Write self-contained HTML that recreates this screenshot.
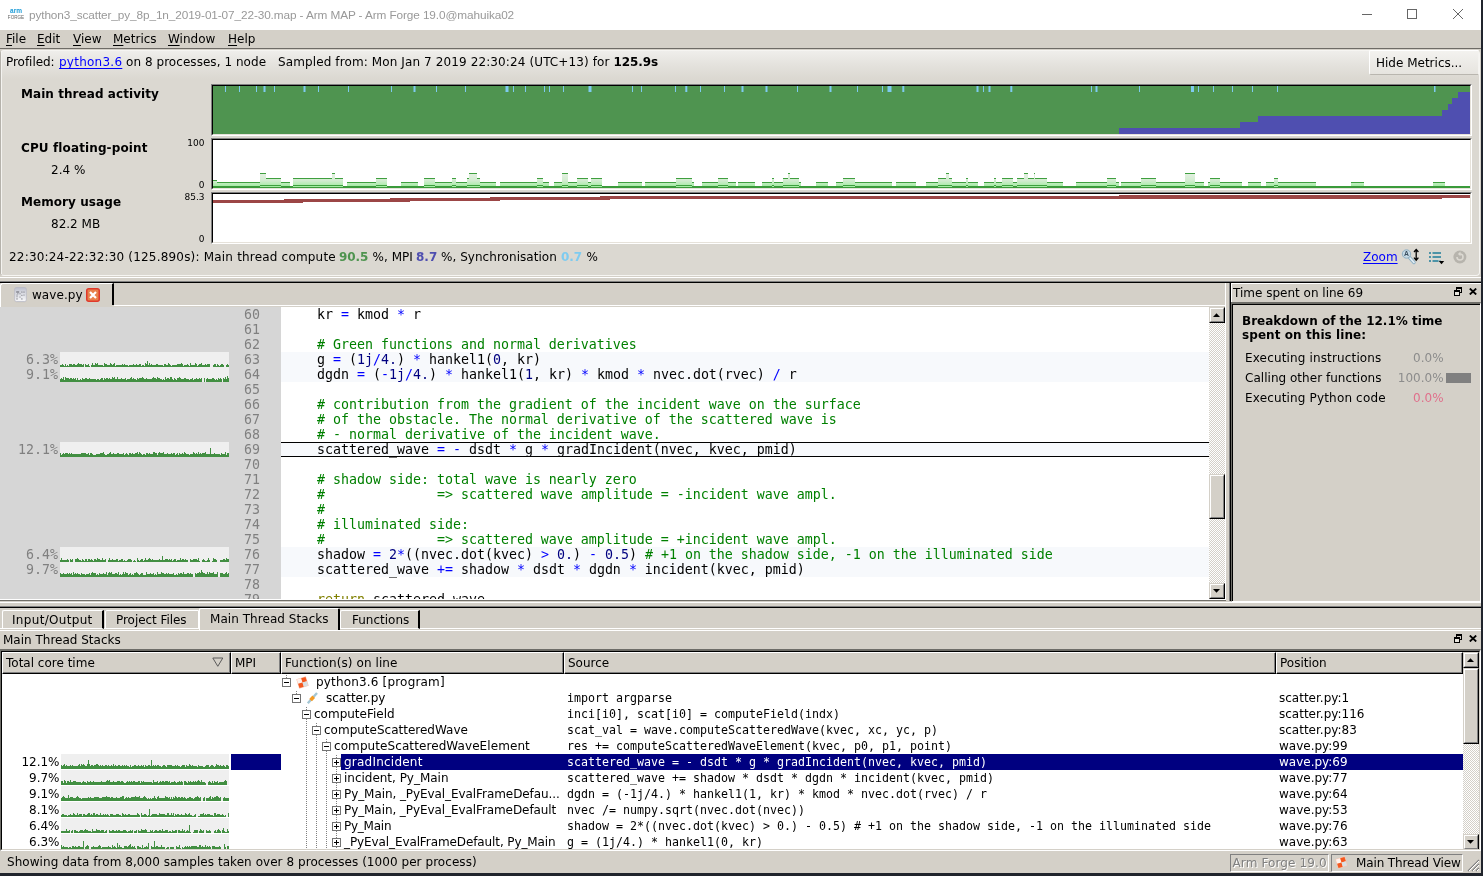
<!DOCTYPE html><html><head><meta charset="utf-8"><title>Arm MAP</title><style>
html,body{margin:0;padding:0;}
body{width:1483px;height:876px;overflow:hidden;background:#20242c;position:relative;}
#w{will-change:transform;position:absolute;left:0;top:0;width:1481px;height:873px;background:#d4d0c8;overflow:hidden;}
#w div,#w span,#w svg{position:absolute;box-sizing:border-box;}
#w span span{position:static;}
.u{font-family:"DejaVu Sans","Liberation Sans",sans-serif;font-size:12px;line-height:14px;color:#000;white-space:pre;}
.b{font-family:"DejaVu Sans","Liberation Sans",sans-serif;font-size:12px;line-height:14px;color:#000;white-space:pre;font-weight:bold;}
.m{font-family:"DejaVu Sans Mono","Liberation Mono",monospace;font-size:13.29px;line-height:15px;color:#000;white-space:pre;}
.s{font-family:"DejaVu Sans Mono","Liberation Mono",monospace;font-size:11.63px;line-height:16px;color:#000;white-space:pre;}
.t{font-family:"Liberation Sans",sans-serif;font-size:11.8px;line-height:14px;color:#999;white-space:pre;}
.g{color:#808080}
.c{color:#008000}
.o{color:#0000ff}
.n{color:#000080}
.k{color:#808000}
u{text-decoration:underline;text-underline-offset:2px;}
a{color:#0000ff;text-decoration:underline;text-underline-offset:2px;}
</style></head><body><div id="w">
<div style="left:0px;top:0px;width:1481px;height:30px;background:#fff;"></div>
<svg style="left:6px;top:8px" width="20" height="12" viewBox="0 0 20 12"><text x="10" y="5.2" text-anchor="middle" font-family="Liberation Sans,sans-serif" font-weight="bold" font-size="6.5" fill="#1b9bd7">arm</text><text x="10" y="10.6" text-anchor="middle" font-family="Liberation Sans,sans-serif" font-size="4.6" fill="#666">FORGE</text></svg>
<span class="t" style="left:29px;top:8px;letter-spacing:-0.106px;">python3_scatter_py_8p_1n_2019-01-07_22-30.map - Arm MAP - Arm Forge 19.0@mahuika02</span>
<svg style="left:1355px;top:4px" width="120" height="22" viewBox="0 0 120 22" fill="none" stroke="#666" stroke-width="1"><path d="M7 10.5h10"/><rect x="52.5" y="5.5" width="9" height="9"/><path d="M98 5l10 10M108 5l-10 10"/></svg>
<div style="left:0px;top:30px;width:1481px;height:18px;background:#d4d0c8;"></div>
<span class="u" style="left:6px;top:32px;"><u>F</u>ile</span>
<span class="u" style="left:37px;top:32px;"><u>E</u>dit</span>
<span class="u" style="left:73px;top:32px;"><u>V</u>iew</span>
<span class="u" style="left:113px;top:32px;"><u>M</u>etrics</span>
<span class="u" style="left:168px;top:32px;"><u>W</u>indow</span>
<span class="u" style="left:228px;top:32px;"><u>H</u>elp</span>
<div style="left:0px;top:48px;width:1481px;height:1px;background:#6e6b66;"></div>
<div style="left:0px;top:50px;width:1480px;height:226px;background:linear-gradient(#efeeeb 0px,#e4e2dd 14px,#dbd8d1 28px,#dbd8d1 100%);border:1px solid #f6f5f2;border-left:1px solid #b5b2ab;border-radius:4px;"></div>
<div style="left:1px;top:51px;width:1px;height:223px;background:#f4f3f0;"></div>
<span class="u" style="left:6px;top:55px;letter-spacing:-0.043px;">Profiled:</span>
<span class="u" style="left:59px;top:55px;letter-spacing:0.249px;"><a>python3.6</a></span>
<span class="u" style="left:126px;top:55px;letter-spacing:0.051px;">on 8 processes, 1 node</span>
<span class="u" style="left:278px;top:55px;letter-spacing:0.113px;">Sampled from: Mon Jan 7 2019 22:30:24 (UTC+13) for</span>
<span class="b" style="left:613.5px;top:55px;letter-spacing:-0.085px;">125.9s</span>
<div style="left:1369px;top:50px;width:110px;height:25px;background:linear-gradient(#f3f2ef,#e6e4df);border:1px solid #fff;border-right-color:#f4f3f0;border-bottom-color:#b9b6af;border-radius:2px 0 0 2px;"></div>
<span class="u" style="left:1376px;top:56px;">Hide Metrics...</span>
<span class="b" style="left:21px;top:87px;letter-spacing:0.063px;">Main thread activity</span>
<div style="left:211px;top:84px;width:1261px;height:52px;background:#4f9450;border-top:1px solid #808080;border-left:1px solid #808080;border-bottom:1px solid #fff;border-right:1px solid #fff;"></div>
<div style="left:212px;top:85px;width:1259px;height:50px;border-top:1px solid #000;border-left:1px solid #000;border-bottom:1px solid #e6e2da;border-right:1px solid #e6e2da;"></div>
<svg style="left:213px;top:86px" width="1257" height="48" viewBox="213 86 1257 48" shape-rendering="crispEdges"><rect x="213" y="86" width="1257" height="48" fill="#4f9450"/><path d="M1119 134V128H1240V122H1258V116H1442V110H1448V104H1452V98H1458V92H1470V134Z" fill="#4f4fb0"/><path d="M225 86v6h1v-6zM239 86v6h1v-6zM256 86v6h1v-6zM263.5 86v6h2v-6zM274 86v6h1v-6zM303.5 86v6h2v-6zM318 86v6h1v-6zM348 86v6h1v-6zM391 86v6h1v-6zM413.5 86v6h2v-6zM436 86v6h1v-6zM465 86v6h1v-6zM505.5 86v6h3v-6zM513 86v6h1v-6zM525 86v6h1v-6zM544 86v6h1v-6zM549 86v6h1v-6zM563 86v6h1v-6zM588.5 86v6h3v-6zM632 86v6h1v-6zM641 86v6h1v-6zM675 86v6h1v-6zM685.3 86v6h2v-6zM700 86v6h1v-6zM724 86v6h1v-6zM741.5 86v6h2v-6zM765.5 86v6h2v-6zM797 86v6h1v-6zM829.5 86v6h2v-6zM857 86v6h1v-6zM882 86v6h1v-6zM887.5 86v6h4v-6zM902.3 86v6h2v-6zM976.5 86v6h2v-6zM983 86v6h1v-6zM988.5 86v6h2v-6zM1010.3 86v6h2v-6zM1091 86v6h1v-6zM1095.5 86v6h2v-6zM1139 86v6h1v-6zM1191 86v6h3v-6zM1198 86v6h1v-6zM1213 86v6h1v-6zM1232 86v6h1v-6zM1252 86v6h1v-6zM1277 86v6h1v-6zM1434 86v6h1.5v-6z" fill="#7ecbf0" shape-rendering="auto"/></svg>
<span class="b" style="left:21px;top:141px;letter-spacing:0.119px;">CPU floating-point</span>
<span class="u" style="left:51px;top:163px;">2.4 %</span>
<span class="u" style="right:1276.5px;top:137px;font-size:9px;line-height:12px;">100</span>
<span class="u" style="right:1276.5px;top:179px;font-size:9px;line-height:12px;">0</span>
<div style="left:211px;top:138px;width:1261px;height:52px;background:#fff;border-top:1px solid #808080;border-left:1px solid #808080;border-bottom:1px solid #fff;border-right:1px solid #fff;"></div>
<div style="left:212px;top:139px;width:1259px;height:50px;border-top:1px solid #000;border-left:1px solid #000;border-bottom:1px solid #e6e2da;border-right:1px solid #e6e2da;"></div>
<svg style="left:213px;top:140px" width="1257" height="48" viewBox="213 140 1257 48" shape-rendering="crispEdges"><defs><linearGradient id="cg" x1="0" y1="172" x2="0" y2="188" gradientUnits="userSpaceOnUse"><stop offset="0" stop-color="#e8f1e6"/><stop offset="0.55" stop-color="#d2ecd0"/><stop offset="1" stop-color="#96ec96"/></linearGradient></defs><path d="M213 187V180H217V187ZM217 187V182H260V187ZM260 187V173H266V187ZM266 187V178H281V187ZM281 187V182H290V187ZM293 187V178H329V187ZM329 187V178H332V187ZM332 187V173H335V187ZM335 187V178H343V187ZM347 187V182H376V187ZM376 187V178H387V187ZM401 187V182H418V187ZM424 187V178H435V187ZM435 187V182H452V187ZM452 187V178H456V187ZM456 187V182H467V187ZM467 187V178H469V187ZM469 187V173H477V187ZM477 187V178H480V187ZM480 187V182H496V187ZM500 187V182H514V187ZM514 187V182H525V187ZM525 187V182H531V187ZM531 187V182H537V187ZM537 187V178H543V187ZM543 187V182H549V187ZM554 187V182H562V187ZM562 187V173H568V187ZM568 187V182H577V187ZM577 187V178H588V187ZM588 187V182H591V187ZM591 187V178H602V187ZM618 187V182H642V187ZM645 187V182H676V187ZM676 187V178H692V187ZM692 187V182H694V187ZM702 187V182H718V187ZM718 187V178H728V187ZM728 187V182H736V187ZM738 187V182H755V187ZM762 187V182H772V187ZM772 187V178H774V187ZM774 187V182H783V187ZM783 187V178H788V187ZM788 187V173H790V187ZM790 187V178H799V187ZM799 187V182H801V187ZM816 187V182H828V187ZM836 187V182H843V187ZM843 187V178H855V187ZM855 187V182H892V187ZM896 187V182H916V187ZM926 187V182H938V187ZM938 187V178H946V187ZM946 187V173H949V187ZM949 187V178H952V187ZM952 187V182H966V187ZM966 187V178H968V187ZM968 187V182H978V187ZM984 187V182H994V187ZM994 187V178H996V187ZM996 187V182H1002V187ZM1002 187V178H1013V187ZM1013 187V182H1017V187ZM1017 187V178H1024V187ZM1024 187V173H1028V187ZM1028 187V178H1034V187ZM1034 187V173H1035V187ZM1035 187V178H1047V187ZM1047 187V182H1050V187ZM1050 187V182H1063V187ZM1076 187V182H1107V187ZM1107 187V178H1116V187ZM1116 187V182H1119V187ZM1121 187V182H1141V187ZM1141 187V178H1156V187ZM1156 187V182H1185V187ZM1185 187V173H1195V187ZM1195 187V182H1204V187ZM1208 187V182H1210V187ZM1210 187V178H1220V187ZM1220 187V182H1242V187ZM1248 187V182H1261V187ZM1266 187V182H1274V187ZM1274 187V178H1278V187ZM1278 187V182H1316V187ZM1351 187V182H1364V187ZM1433 187V182H1445V187Z" fill="url(#cg)"/><path d="M213 180h4v1h-4zM217 182h43v1h-43zM260 173h6v1h-6zM266 178h15v1h-15zM281 182h9v1h-9zM293 178h36v1h-36zM329 178h3v1h-3zM332 173h3v1h-3zM335 178h8v1h-8zM347 182h29v1h-29zM376 178h11v1h-11zM401 182h17v1h-17zM424 178h11v1h-11zM435 182h17v1h-17zM452 178h4v1h-4zM456 182h11v1h-11zM467 178h2v1h-2zM469 173h8v1h-8zM477 178h3v1h-3zM480 182h16v1h-16zM500 182h14v1h-14zM514 182h11v1h-11zM525 182h6v1h-6zM531 182h6v1h-6zM537 178h6v1h-6zM543 182h6v1h-6zM554 182h8v1h-8zM562 173h6v1h-6zM568 182h9v1h-9zM577 178h11v1h-11zM588 182h3v1h-3zM591 178h11v1h-11zM618 182h24v1h-24zM645 182h31v1h-31zM676 178h16v1h-16zM692 182h2v1h-2zM702 182h16v1h-16zM718 178h10v1h-10zM728 182h8v1h-8zM738 182h17v1h-17zM762 182h10v1h-10zM772 178h2v1h-2zM774 182h9v1h-9zM783 178h5v1h-5zM788 173h2v1h-2zM790 178h9v1h-9zM799 182h2v1h-2zM816 182h12v1h-12zM836 182h7v1h-7zM843 178h12v1h-12zM855 182h37v1h-37zM896 182h20v1h-20zM926 182h12v1h-12zM938 178h8v1h-8zM946 173h3v1h-3zM949 178h3v1h-3zM952 182h14v1h-14zM966 178h2v1h-2zM968 182h10v1h-10zM984 182h10v1h-10zM994 178h2v1h-2zM996 182h6v1h-6zM1002 178h11v1h-11zM1013 182h4v1h-4zM1017 178h7v1h-7zM1024 173h4v1h-4zM1028 178h6v1h-6zM1034 173h1v1h-1zM1035 178h12v1h-12zM1047 182h3v1h-3zM1050 182h13v1h-13zM1076 182h31v1h-31zM1107 178h9v1h-9zM1116 182h3v1h-3zM1121 182h20v1h-20zM1141 178h15v1h-15zM1156 182h29v1h-29zM1185 173h10v1h-10zM1195 182h9v1h-9zM1208 182h2v1h-2zM1210 178h10v1h-10zM1220 182h22v1h-22zM1248 182h13v1h-13zM1266 182h8v1h-8zM1274 178h4v1h-4zM1278 182h38v1h-38zM1351 182h13v1h-13zM1433 182h12v1h-12z" fill="#3f9f3f"/><rect x="213" y="186" width="1257" height="2" fill="#3a9a3a"/><path d="M260 186h6v1h-6zM266 186h15v1h-15zM293 186h36v1h-36zM329 186h3v1h-3zM332 186h3v1h-3zM335 186h8v1h-8zM376 186h11v1h-11zM424 186h11v1h-11zM452 186h4v1h-4zM467 186h2v1h-2zM469 186h8v1h-8zM477 186h3v1h-3zM537 186h6v1h-6zM562 186h6v1h-6zM577 186h11v1h-11zM591 186h11v1h-11zM676 186h16v1h-16zM718 186h10v1h-10zM772 186h2v1h-2zM783 186h5v1h-5zM788 186h2v1h-2zM790 186h9v1h-9zM843 186h12v1h-12zM938 186h8v1h-8zM946 186h3v1h-3zM949 186h3v1h-3zM966 186h2v1h-2zM994 186h2v1h-2zM1002 186h11v1h-11zM1017 186h7v1h-7zM1024 186h4v1h-4zM1028 186h6v1h-6zM1034 186h1v1h-1zM1035 186h12v1h-12zM1107 186h9v1h-9zM1141 186h15v1h-15zM1185 186h10v1h-10zM1210 186h10v1h-10zM1274 186h4v1h-4z" fill="#a4eea4"/><path d="M260 185h6v1h-6zM266 185h15v1h-15zM293 185h36v1h-36zM329 185h3v1h-3zM332 185h3v1h-3zM335 185h8v1h-8zM376 185h11v1h-11zM424 185h11v1h-11zM452 185h4v1h-4zM467 185h2v1h-2zM469 185h8v1h-8zM477 185h3v1h-3zM537 185h6v1h-6zM562 185h6v1h-6zM577 185h11v1h-11zM591 185h11v1h-11zM676 185h16v1h-16zM718 185h10v1h-10zM772 185h2v1h-2zM783 185h5v1h-5zM788 185h2v1h-2zM790 185h9v1h-9zM843 185h12v1h-12zM938 185h8v1h-8zM946 185h3v1h-3zM949 185h3v1h-3zM966 185h2v1h-2zM994 185h2v1h-2zM1002 185h11v1h-11zM1017 185h7v1h-7zM1024 185h4v1h-4zM1028 185h6v1h-6zM1034 185h1v1h-1zM1035 185h12v1h-12zM1107 185h9v1h-9zM1141 185h15v1h-15zM1185 185h10v1h-10zM1210 185h10v1h-10zM1274 185h4v1h-4z" fill="#3f9f3f"/></svg>
<span class="b" style="left:21px;top:195px;letter-spacing:0.070px;">Memory usage</span>
<span class="u" style="left:51px;top:217px;">82.2 MB</span>
<span class="u" style="right:1276.5px;top:191px;font-size:9px;line-height:12px;">85.3</span>
<span class="u" style="right:1276.5px;top:233px;font-size:9px;line-height:12px;">0</span>
<div style="left:211px;top:192px;width:1261px;height:52px;background:#fff;border-top:1px solid #808080;border-left:1px solid #808080;border-bottom:1px solid #fff;border-right:1px solid #fff;"></div>
<div style="left:212px;top:193px;width:1259px;height:50px;border-top:1px solid #000;border-left:1px solid #000;border-bottom:1px solid #e6e2da;border-right:1px solid #e6e2da;"></div>
<svg style="left:213px;top:194px" width="1257" height="48" viewBox="213 194 1257 48" shape-rendering="crispEdges"><path d="M213 200H284V199H390V198H490V197H600V196H1119V195H1470V198H1442V199H610V200H500V201H410V202H303V203H213Z" fill="#9c4646"/></svg>
<span class="u" style="left:9px;top:250px;letter-spacing:0.190px;">22:30:24-22:32:30 (125.890s): Main thread compute</span>
<span class="b" style="left:339px;top:250px;color:#4f9450;letter-spacing:-0.077px;">90.5</span>
<span class="u" style="left:372.5px;top:250px;letter-spacing:0.038px;">%, MPI</span>
<span class="b" style="left:416px;top:250px;color:#4f4fb0;letter-spacing:0.011px;">8.7</span>
<span class="u" style="left:441px;top:250px;letter-spacing:0.044px;">%, Synchronisation</span>
<span class="b" style="left:561px;top:250px;color:#7ecbf0;letter-spacing:-0.022px;">0.7</span>
<span class="u" style="left:586.5px;top:250px;letter-spacing:-0.506px;">%</span>
<span class="u" style="left:1363px;top:250px;"><a>Zoom</a></span>
<svg style="left:1400px;top:247px" width="72" height="20" viewBox="0 0 72 20"><path d="M9.500 10.500L14 15.500" stroke="#8fb2c6" stroke-width="3.400" stroke-linecap="round"/><path d="M10 11L14 15.500" stroke="#e6eff5" stroke-width="1.600" stroke-linecap="round"/><circle cx="6.500" cy="7" r="4.200" fill="#c5d9e5" stroke="#8fb0c4"/><text x="6.500" y="9.400" font-size="6.800" font-weight="bold" font-family="Liberation Sans,sans-serif" text-anchor="middle" fill="#3a4f60">A</text><path d="M16.200 3v9.500M14 5l2.200-2.600l2.200 2.600M14 10.600l2.200 2.600l2.200-2.600" stroke="#000" stroke-width="1.300" fill="none"/><path d="M29 6h2M29 10h2M29 14h2M32.500 6h8.500M32.500 10h8.500M32.500 14h8.500" stroke="#4d93a7" stroke-width="2"/><path d="M37.800 13.500h7l-3.500 4.200z" fill="#dbd8d1"/><path d="M38.800 14h5.400l-2.700 3.300z" fill="#000"/><circle cx="59.900" cy="10" r="6.500" fill="#b7b4ad"/><path d="M57 10a3 3 0 1 0 3-3" fill="none" stroke="#dcd9d2" stroke-width="1.600"/><path d="M60.500 4.600l-2.600 2.400l2.600 2.200z" fill="#dcd9d2"/></svg>
<div style="left:0px;top:277px;width:1481px;height:1px;background:#fff;"></div>
<div style="left:0px;top:281px;width:1481px;height:1px;background:#808080;"></div>
<div style="left:0px;top:282px;width:1481px;height:1px;background:#000;"></div>
<div style="left:0px;top:283px;width:114px;height:23px;background:#d4d0c8;border-left:1px solid #fff;border-top:1px solid #fff;border-right:2px solid #000;border-top-left-radius:3px;"></div>
<svg style="left:13.500px;top:286.500px" width="13" height="16" viewBox="0 0 13 16"><defs><linearGradient id="fi" x1="0" y1="0" x2="0" y2="1"><stop offset="0" stop-color="#bcbecc"/><stop offset="0.28" stop-color="#d2d4dc"/><stop offset="1" stop-color="#f8f8fa"/></linearGradient></defs><rect x="0.700" y="1.200" width="11.600" height="14" rx="1.600" fill="#b9b6ae" opacity="0.600"/><rect x="0.700" y="0.500" width="11.600" height="14" rx="1.600" fill="url(#fi)" stroke="#b7b9c6" stroke-width="0.700"/><path d="M2.200 5h3" stroke="#5c5c66" stroke-width="1"/><g fill="#5c5c66"><circle cx="7.900" cy="5" r="0.600"/><circle cx="10" cy="5" r="0.600"/><circle cx="3.900" cy="6.700" r="0.500"/><circle cx="6" cy="6.700" r="0.500"/><circle cx="3" cy="8" r="0.500"/><circle cx="7.900" cy="8.200" r="0.550"/><circle cx="10" cy="8" r="0.500"/><circle cx="3" cy="9.700" r="0.500"/><circle cx="6" cy="10" r="0.500"/><circle cx="3" cy="11.900" r="0.550"/><circle cx="7.900" cy="11.900" r="0.550"/></g></svg>
<span class="u" style="left:32px;top:288px;letter-spacing:0.059px;">wave.py</span>
<svg style="left:86px;top:288px" width="14" height="14" viewBox="0 0 14 14"><rect x="0.75" y="0.75" width="12.5" height="12.5" rx="2" fill="#e8814c" stroke="#e0392b" stroke-width="1.5"/><path d="M4 4l6 6M10 4l-6 6" stroke="#fff" stroke-width="2.2"/></svg>
<div style="left:114px;top:305px;width:1112px;height:1px;background:#fff;"></div>
<div style="left:1225px;top:283px;width:1px;height:23px;background:#fff;"></div>
<div style="left:1225px;top:306px;width:1px;height:293px;background:#fff;"></div>
<div style="left:0px;top:307px;width:1225px;height:292px;background:#fff;"></div>
<div style="left:0px;top:307px;width:281px;height:292px;background:#d6d6d6;"></div>
<div style="left:0px;top:306px;width:1px;height:1px;background:#fff;"></div>
<div style="left:0px;top:305px;width:114px;height:1px;background:#d4d0c8;"></div>
<div style="left:0px;top:305px;width:1px;height:1px;background:#fff;"></div>
<div style="left:281px;top:352px;width:928px;height:15px;background:#f7f9fc;"></div>
<div style="left:281px;top:367px;width:928px;height:15px;background:#f7f9fc;"></div>
<div style="left:281px;top:547px;width:928px;height:15px;background:#f7f9fc;"></div>
<div style="left:281px;top:562px;width:928px;height:15px;background:#f7f9fc;"></div>
<div style="left:281px;top:442px;width:928px;height:15px;background:#f7f9fc;"></div>
<div style="left:0;top:306px;width:1209px;height:293px;overflow:hidden;">
<span class="m g" style="right:949px;top:1px">60</span>
<span class="m" style="left:285px;top:1px">    kr <span class="o">=</span> kmod <span class="o">*</span> r</span>
<span class="m g" style="right:949px;top:16px">61</span>
<span class="m g" style="right:949px;top:31px">62</span>
<span class="m" style="left:285px;top:31px">    <span class="c"># Green functions and normal derivatives</span></span>
<span class="m g" style="right:949px;top:46px">63</span>
<span class="m" style="left:285px;top:46px">    g <span class="o">=</span> (<span class="n">1j</span><span class="o">/</span><span class="n">4.</span>) <span class="o">*</span> hankel1(<span class="n">0</span>, kr)</span>
<span class="m g" style="right:949px;top:61px">64</span>
<span class="m" style="left:285px;top:61px">    dgdn <span class="o">=</span> (<span class="o">-</span><span class="n">1j</span><span class="o">/</span><span class="n">4.</span>) <span class="o">*</span> hankel1(<span class="n">1</span>, kr) <span class="o">*</span> kmod <span class="o">*</span> nvec.dot(rvec) <span class="o">/</span> r</span>
<span class="m g" style="right:949px;top:76px">65</span>
<span class="m g" style="right:949px;top:91px">66</span>
<span class="m" style="left:285px;top:91px">    <span class="c"># contribution from the gradient of the incident wave on the surface</span></span>
<span class="m g" style="right:949px;top:106px">67</span>
<span class="m" style="left:285px;top:106px">    <span class="c"># of the obstacle. The normal derivative of the scattered wave is</span></span>
<span class="m g" style="right:949px;top:121px">68</span>
<span class="m" style="left:285px;top:121px">    <span class="c"># - normal derivative of the incident wave.</span></span>
<span class="m g" style="right:949px;top:136px">69</span>
<span class="m" style="left:285px;top:136px">    scattered_wave <span class="o">=</span> <span class="o">-</span> dsdt <span class="o">*</span> g <span class="o">*</span> gradIncident(nvec, kvec, pmid)</span>
<span class="m g" style="right:949px;top:151px">70</span>
<span class="m g" style="right:949px;top:166px">71</span>
<span class="m" style="left:285px;top:166px">    <span class="c"># shadow side: total wave is nearly zero</span></span>
<span class="m g" style="right:949px;top:181px">72</span>
<span class="m" style="left:285px;top:181px">    <span class="c">#              =&gt; scattered wave amplitude = -incident wave ampl.</span></span>
<span class="m g" style="right:949px;top:196px">73</span>
<span class="m" style="left:285px;top:196px">    <span class="c">#</span></span>
<span class="m g" style="right:949px;top:211px">74</span>
<span class="m" style="left:285px;top:211px">    <span class="c"># illuminated side:</span></span>
<span class="m g" style="right:949px;top:226px">75</span>
<span class="m" style="left:285px;top:226px">    <span class="c">#              =&gt; scattered wave amplitude = +incident wave ampl.</span></span>
<span class="m g" style="right:949px;top:241px">76</span>
<span class="m" style="left:285px;top:241px">    shadow <span class="o">=</span> <span class="n">2</span><span class="o">*</span>((nvec.dot(kvec) <span class="o">&gt;</span> <span class="n">0.</span>) <span class="o">-</span> <span class="n">0.5</span>) <span class="c"># +1 on the shadow side, -1 on the illuminated side</span></span>
<span class="m g" style="right:949px;top:256px">77</span>
<span class="m" style="left:285px;top:256px">    scattered_wave <span class="o">+=</span> shadow <span class="o">*</span> dsdt <span class="o">*</span> dgdn <span class="o">*</span> incident(kvec, pmid)</span>
<span class="m g" style="right:949px;top:271px">78</span>
<span class="m g" style="right:949px;top:286px">79</span>
<span class="m" style="left:285px;top:286px">    <span class="k">return</span> scattered_wave</span>
</div>
<div style="left:281px;top:442px;width:928px;height:1px;background:#000;"></div>
<div style="left:281px;top:456px;width:928px;height:1px;background:#000;"></div>
<span class="m g" style="right:1423px;top:352px">6.3%</span>
<svg style="left:60px;top:352px;background:#efefef" width="169" height="15" viewBox="0 0 169 15" shape-rendering="crispEdges"><path d="M0 15v-2h1v2zM1 15v-2h1v2zM2 15v-3h1v3zM3 15v-2h1v2zM4 15v-1h1v1zM5 15v-3h1v3zM6 15v-1h1v1zM7 15v-2h1v2zM8 15v-1h1v1zM9 15v-3h1v3zM10 15v-3h1v3zM11 15v-3h1v3zM12 15v-2h1v2zM13 15v-3h1v3zM14 15v-3h1v3zM15 15v-2h1v2zM16 15v-2h1v2zM17 15v-3h1v3zM18 15v-4h1v4zM19 15v-3h1v3zM20 15v-3h1v3zM21 15v-3h1v3zM22 15v-2h1v2zM23 15v-3h1v3zM25 15v-3h1v3zM26 15v-2h1v2zM27 15v-2h1v2zM28 15v-3h1v3zM29 15v-1h1v1zM31 15v-2h1v2zM32 15v-4h1v4zM33 15v-2h1v2zM34 15v-2h1v2zM35 15v-4h1v4zM36 15v-3h1v3zM37 15v-4h1v4zM38 15v-2h1v2zM39 15v-2h1v2zM40 15v-2h1v2zM41 15v-2h1v2zM42 15v-2h1v2zM43 15v-1h1v1zM44 15v-4h1v4zM45 15v-3h1v3zM46 15v-3h1v3zM47 15v-2h1v2zM48 15v-2h1v2zM49 15v-2h1v2zM50 15v-4h1v4zM51 15v-3h1v3zM52 15v-2h1v2zM53 15v-3h1v3zM54 15v-4h1v4zM55 15v-1h1v1zM56 15v-2h1v2zM57 15v-2h1v2zM58 15v-2h1v2zM59 15v-2h1v2zM60 15v-2h1v2zM61 15v-2h1v2zM62 15v-3h1v3zM63 15v-2h1v2zM64 15v-3h1v3zM65 15v-2h1v2zM66 15v-2h1v2zM67 15v-2h1v2zM68 15v-1h1v1zM69 15v-2h1v2zM70 15v-2h1v2zM71 15v-2h1v2zM72 15v-2h1v2zM73 15v-3h1v3zM74 15v-2h1v2zM75 15v-2h1v2zM76 15v-3h1v3zM77 15v-2h1v2zM78 15v-2h1v2zM79 15v-3h1v3zM80 15v-3h1v3zM81 15v-1h1v1zM82 15v-2h1v2zM83 15v-2h1v2zM84 15v-1h1v1zM85 15v-4h1v4zM86 15v-3h1v3zM87 15v-6h1v6zM88 15v-2h1v2zM89 15v-4h1v4zM90 15v-2h1v2zM91 15v-3h1v3zM92 15v-2h1v2zM93 15v-2h1v2zM94 15v-2h1v2zM95 15v-2h1v2zM96 15v-3h1v3zM97 15v-3h1v3zM98 15v-2h1v2zM99 15v-2h1v2zM100 15v-2h1v2zM101 15v-2h1v2zM102 15v-2h1v2zM103 15v-1h1v1zM104 15v-3h1v3zM105 15v-3h1v3zM106 15v-2h1v2zM107 15v-2h1v2zM108 15v-4h1v4zM109 15v-3h1v3zM110 15v-2h1v2zM111 15v-1h1v1zM112 15v-2h1v2zM113 15v-2h1v2zM114 15v-2h1v2zM115 15v-2h1v2zM116 15v-2h1v2zM117 15v-3h1v3zM118 15v-3h1v3zM119 15v-3h1v3zM120 15v-3h1v3zM121 15v-4h1v4zM122 15v-3h1v3zM123 15v-1h1v1zM124 15v-2h1v2zM125 15v-2h1v2zM126 15v-2h1v2zM127 15v-3h1v3zM128 15v-2h1v2zM129 15v-1h1v1zM130 15v-4h1v4zM131 15v-2h1v2zM132 15v-2h1v2zM133 15v-2h1v2zM134 15v-2h1v2zM135 15v-4h1v4zM136 15v-3h1v3zM137 15v-1h1v1zM138 15v-2h1v2zM139 15v-3h1v3zM140 15v-3h1v3zM141 15v-4h1v4zM142 15v-2h1v2zM143 15v-2h1v2zM144 15v-2h1v2zM145 15v-3h1v3zM146 15v-2h1v2zM147 15v-3h1v3zM148 15v-3h1v3zM149 15v-3h1v3zM153 15v-2h1v2zM154 15v-3h1v3zM155 15v-3h1v3zM156 15v-1h1v1zM157 15v-3h1v3zM158 15v-2h1v2zM159 15v-1h1v1zM160 15v-2h1v2zM161 15v-3h1v3zM162 15v-3h1v3zM163 15v-2h1v2zM166 15v-2h1v2zM167 15v-3h1v3zM168 15v-2h1v2z" fill="#428f42"/></svg>
<span class="m g" style="right:1423px;top:367px">9.1%</span>
<svg style="left:60px;top:367px;background:#efefef" width="169" height="15" viewBox="0 0 169 15" shape-rendering="crispEdges"><path d="M0 15v-3h1v3zM1 15v-4h1v4zM2 15v-3h1v3zM3 15v-5h1v5zM4 15v-2h1v2zM5 15v-5h1v5zM6 15v-4h1v4zM7 15v-4h1v4zM8 15v-4h1v4zM9 15v-3h1v3zM10 15v-4h1v4zM11 15v-4h1v4zM12 15v-3h1v3zM13 15v-4h1v4zM14 15v-3h1v3zM15 15v-4h1v4zM16 15v-2h1v2zM17 15v-4h1v4zM18 15v-2h1v2zM19 15v-2h1v2zM20 15v-3h1v3zM21 15v-2h1v2zM22 15v-4h1v4zM23 15v-3h1v3zM24 15v-3h1v3zM25 15v-4h1v4zM26 15v-4h1v4zM27 15v-3h1v3zM28 15v-3h1v3zM29 15v-4h1v4zM30 15v-3h1v3zM31 15v-3h1v3zM32 15v-3h1v3zM33 15v-3h1v3zM34 15v-3h1v3zM35 15v-3h1v3zM36 15v-2h1v2zM37 15v-3h1v3zM38 15v-3h1v3zM39 15v-2h1v2zM40 15v-3h1v3zM41 15v-4h1v4zM42 15v-4h1v4zM43 15v-2h1v2zM44 15v-4h1v4zM45 15v-3h1v3zM46 15v-4h1v4zM47 15v-4h1v4zM48 15v-3h1v3zM49 15v-4h1v4zM50 15v-3h1v3zM51 15v-3h1v3zM52 15v-5h1v5zM53 15v-4h1v4zM54 15v-5h1v5zM55 15v-3h1v3zM56 15v-3h1v3zM57 15v-5h1v5zM58 15v-3h1v3zM59 15v-3h1v3zM60 15v-3h1v3zM61 15v-4h1v4zM62 15v-3h1v3zM63 15v-3h1v3zM64 15v-3h1v3zM65 15v-4h1v4zM66 15v-2h1v2zM67 15v-3h1v3zM68 15v-3h1v3zM69 15v-3h1v3zM70 15v-4h1v4zM71 15v-5h1v5zM72 15v-3h1v3zM73 15v-4h1v4zM74 15v-3h1v3zM75 15v-3h1v3zM76 15v-2h1v2zM77 15v-4h1v4zM78 15v-3h1v3zM79 15v-4h1v4zM80 15v-4h1v4zM81 15v-4h1v4zM82 15v-5h1v5zM83 15v-4h1v4zM84 15v-3h1v3zM85 15v-3h1v3zM86 15v-4h1v4zM87 15v-3h1v3zM88 15v-3h1v3zM89 15v-3h1v3zM90 15v-3h1v3zM91 15v-3h1v3zM92 15v-4h1v4zM93 15v-5h1v5zM94 15v-4h1v4zM95 15v-4h1v4zM96 15v-3h1v3zM97 15v-5h1v5zM98 15v-4h1v4zM99 15v-4h1v4zM100 15v-3h1v3zM101 15v-3h1v3zM102 15v-2h1v2zM103 15v-3h1v3zM104 15v-2h1v2zM105 15v-5h1v5zM106 15v-3h1v3zM107 15v-4h1v4zM108 15v-4h1v4zM109 15v-3h1v3zM110 15v-5h1v5zM111 15v-5h1v5zM112 15v-3h1v3zM113 15v-2h1v2zM114 15v-4h1v4zM115 15v-3h1v3zM116 15v-2h1v2zM117 15v-4h1v4zM118 15v-4h1v4zM119 15v-5h1v5zM120 15v-4h1v4zM121 15v-3h1v3zM122 15v-3h1v3zM123 15v-3h1v3zM124 15v-4h1v4zM125 15v-4h1v4zM126 15v-3h1v3zM127 15v-3h1v3zM128 15v-3h1v3zM129 15v-2h1v2zM130 15v-3h1v3zM131 15v-3h1v3zM132 15v-4h1v4zM133 15v-2h1v2zM134 15v-3h1v3zM135 15v-3h1v3zM136 15v-4h1v4zM137 15v-3h1v3zM138 15v-3h1v3zM139 15v-4h1v4zM140 15v-3h1v3zM141 15v-4h1v4zM144 15v-4h1v4zM146 15v-3h1v3zM147 15v-4h1v4zM148 15v-3h1v3zM149 15v-3h1v3zM150 15v-3h1v3zM151 15v-3h1v3zM152 15v-4h1v4zM153 15v-4h1v4zM154 15v-3h1v3zM155 15v-2h1v2zM156 15v-3h1v3zM157 15v-2h1v2zM158 15v-4h1v4zM159 15v-3h1v3zM160 15v-4h1v4zM161 15v-3h1v3zM163 15v-4h1v4zM164 15v-3h1v3zM165 15v-5h1v5zM166 15v-3h1v3zM167 15v-6h1v6zM168 15v-4h1v4z" fill="#428f42"/></svg>
<span class="m g" style="right:1423px;top:442px">12.1%</span>
<svg style="left:60px;top:442px;background:#efefef" width="169" height="15" viewBox="0 0 169 15" shape-rendering="crispEdges"><path d="M0 15v-4h1v4zM1 15v-2h1v2zM2 15v-3h1v3zM3 15v-4h1v4zM4 15v-3h1v3zM5 15v-4h1v4zM6 15v-4h1v4zM7 15v-4h1v4zM8 15v-3h1v3zM9 15v-4h1v4zM10 15v-3h1v3zM11 15v-4h1v4zM12 15v-3h1v3zM13 15v-3h1v3zM14 15v-3h1v3zM15 15v-3h1v3zM16 15v-3h1v3zM17 15v-3h1v3zM18 15v-3h1v3zM19 15v-3h1v3zM20 15v-3h1v3zM21 15v-4h1v4zM22 15v-4h1v4zM23 15v-4h1v4zM24 15v-4h1v4zM25 15v-4h1v4zM26 15v-3h1v3zM27 15v-3h1v3zM28 15v-4h1v4zM29 15v-2h1v2zM30 15v-4h1v4zM31 15v-4h1v4zM32 15v-3h1v3zM33 15v-2h1v2zM34 15v-2h1v2zM35 15v-2h1v2zM36 15v-3h1v3zM37 15v-3h1v3zM38 15v-3h1v3zM39 15v-3h1v3zM40 15v-4h1v4zM41 15v-4h1v4zM42 15v-4h1v4zM43 15v-5h1v5zM44 15v-3h1v3zM45 15v-2h1v2zM46 15v-2h1v2zM47 15v-3h1v3zM48 15v-3h1v3zM49 15v-4h1v4zM50 15v-5h1v5zM51 15v-3h1v3zM52 15v-3h1v3zM53 15v-4h1v4zM54 15v-3h1v3zM55 15v-3h1v3zM56 15v-3h1v3zM57 15v-4h1v4zM58 15v-4h1v4zM59 15v-3h1v3zM60 15v-3h1v3zM61 15v-3h1v3zM62 15v-3h1v3zM63 15v-4h1v4zM64 15v-2h1v2zM65 15v-3h1v3zM66 15v-4h1v4zM67 15v-3h1v3zM68 15v-2h1v2zM69 15v-4h1v4zM70 15v-4h1v4zM71 15v-3h1v3zM72 15v-4h1v4zM73 15v-3h1v3zM74 15v-3h1v3zM75 15v-4h1v4zM76 15v-4h1v4zM77 15v-5h1v5zM78 15v-3h1v3zM79 15v-5h1v5zM80 15v-4h1v4zM81 15v-3h1v3zM82 15v-2h1v2zM83 15v-3h1v3zM84 15v-3h1v3zM85 15v-2h1v2zM86 15v-4h1v4zM87 15v-4h1v4zM88 15v-3h1v3zM89 15v-4h1v4zM90 15v-3h1v3zM91 15v-3h1v3zM92 15v-3h1v3zM93 15v-5h1v5zM94 15v-5h1v5zM95 15v-4h1v4zM96 15v-4h1v4zM97 15v-2h1v2zM98 15v-4h1v4zM99 15v-5h1v5zM100 15v-4h1v4zM101 15v-4h1v4zM102 15v-4h1v4zM103 15v-5h1v5zM104 15v-3h1v3zM105 15v-3h1v3zM106 15v-3h1v3zM107 15v-4h1v4zM108 15v-3h1v3zM109 15v-3h1v3zM110 15v-3h1v3zM111 15v-4h1v4zM112 15v-3h1v3zM113 15v-4h1v4zM114 15v-4h1v4zM115 15v-2h1v2zM116 15v-3h1v3zM117 15v-4h1v4zM118 15v-2h1v2zM119 15v-4h1v4zM120 15v-3h1v3zM121 15v-3h1v3zM122 15v-4h1v4zM123 15v-3h1v3zM124 15v-5h1v5zM125 15v-4h1v4zM126 15v-3h1v3zM127 15v-3h1v3zM128 15v-3h1v3zM129 15v-2h1v2zM130 15v-3h1v3zM131 15v-3h1v3zM132 15v-3h1v3zM133 15v-5h1v5zM134 15v-4h1v4zM135 15v-3h1v3zM136 15v-4h1v4zM137 15v-3h1v3zM138 15v-5h1v5zM139 15v-3h1v3zM140 15v-4h1v4zM141 15v-3h1v3zM142 15v-4h1v4zM143 15v-4h1v4zM144 15v-4h1v4zM145 15v-5h1v5zM146 15v-3h1v3zM147 15v-3h1v3zM148 15v-3h1v3zM149 15v-3h1v3zM150 15v-9h1v9zM151 15v-3h1v3zM152 15v-3h1v3zM153 15v-3h1v3zM154 15v-4h1v4zM155 15v-3h1v3zM156 15v-3h1v3zM157 15v-3h1v3zM158 15v-3h1v3zM159 15v-3h1v3zM160 15v-2h1v2zM161 15v-4h1v4zM162 15v-3h1v3zM163 15v-3h1v3zM164 15v-3h1v3zM165 15v-5h1v5zM166 15v-2h1v2zM167 15v-4h1v4zM168 15v-4h1v4z" fill="#428f42"/></svg>
<span class="m g" style="right:1423px;top:547px">6.4%</span>
<svg style="left:60px;top:547px;background:#efefef" width="169" height="15" viewBox="0 0 169 15" shape-rendering="crispEdges"><path d="M0 15v-2h1v2zM1 15v-4h1v4zM2 15v-2h1v2zM3 15v-2h1v2zM4 15v-2h1v2zM5 15v-2h1v2zM6 15v-2h1v2zM7 15v-3h1v3zM8 15v-2h1v2zM10 15v-3h1v3zM11 15v-2h1v2zM12 15v-3h1v3zM15 15v-3h1v3zM16 15v-3h1v3zM17 15v-4h1v4zM18 15v-3h1v3zM19 15v-2h1v2zM20 15v-2h1v2zM21 15v-1h1v1zM22 15v-3h1v3zM23 15v-2h1v2zM24 15v-1h1v1zM25 15v-3h1v3zM26 15v-3h1v3zM27 15v-1h1v1zM28 15v-3h1v3zM29 15v-3h1v3zM30 15v-2h1v2zM31 15v-3h1v3zM32 15v-2h1v2zM33 15v-1h1v1zM34 15v-3h1v3zM35 15v-3h1v3zM36 15v-2h1v2zM37 15v-4h1v4zM38 15v-3h1v3zM39 15v-3h1v3zM40 15v-2h1v2zM41 15v-2h1v2zM42 15v-4h1v4zM43 15v-2h1v2zM44 15v-2h1v2zM45 15v-3h1v3zM48 15v-2h1v2zM49 15v-4h1v4zM50 15v-2h1v2zM51 15v-2h1v2zM52 15v-3h1v3zM53 15v-2h1v2zM54 15v-2h1v2zM55 15v-2h1v2zM56 15v-3h1v3zM57 15v-3h1v3zM58 15v-1h1v1zM59 15v-2h1v2zM60 15v-2h1v2zM61 15v-3h1v3zM62 15v-3h1v3zM63 15v-1h1v1zM64 15v-2h1v2zM65 15v-1h1v1zM66 15v-1h1v1zM67 15v-2h1v2zM68 15v-3h1v3zM69 15v-3h1v3zM70 15v-3h1v3zM71 15v-2h1v2zM73 15v-1h1v1zM74 15v-2h1v2zM75 15v-1h1v1zM77 15v-4h1v4zM78 15v-2h1v2zM79 15v-1h1v1zM80 15v-2h1v2zM81 15v-3h1v3zM82 15v-3h1v3zM83 15v-1h1v1zM84 15v-2h1v2zM85 15v-4h1v4zM86 15v-2h1v2zM87 15v-2h1v2zM88 15v-3h1v3zM89 15v-4h1v4zM90 15v-3h1v3zM91 15v-2h1v2zM92 15v-3h1v3zM93 15v-2h1v2zM94 15v-2h1v2zM95 15v-2h1v2zM96 15v-2h1v2zM97 15v-2h1v2zM98 15v-2h1v2zM99 15v-3h1v3zM100 15v-2h1v2zM101 15v-2h1v2zM102 15v-6h1v6zM103 15v-2h1v2zM104 15v-2h1v2zM105 15v-3h1v3zM106 15v-3h1v3zM107 15v-3h1v3zM108 15v-2h1v2zM109 15v-3h1v3zM110 15v-2h1v2zM111 15v-3h1v3zM112 15v-1h1v1zM113 15v-2h1v2zM114 15v-3h1v3zM115 15v-3h1v3zM116 15v-1h1v1zM117 15v-2h1v2zM118 15v-2h1v2zM119 15v-2h1v2zM120 15v-4h1v4zM121 15v-2h1v2zM122 15v-3h1v3zM123 15v-3h1v3zM124 15v-2h1v2zM125 15v-3h1v3zM126 15v-2h1v2zM127 15v-2h1v2zM130 15v-3h1v3zM131 15v-2h1v2zM132 15v-2h1v2zM133 15v-3h1v3zM134 15v-3h1v3zM135 15v-3h1v3zM136 15v-3h1v3zM137 15v-2h1v2zM138 15v-4h1v4zM139 15v-1h1v1zM142 15v-2h1v2zM143 15v-3h1v3zM144 15v-2h1v2zM145 15v-1h1v1zM146 15v-1h1v1zM147 15v-2h1v2zM148 15v-4h1v4zM149 15v-2h1v2zM152 15v-1h1v1zM153 15v-4h1v4zM154 15v-3h1v3zM155 15v-3h1v3zM156 15v-2h1v2zM160 15v-2h1v2zM161 15v-2h1v2zM162 15v-2h1v2zM163 15v-3h1v3zM164 15v-3h1v3zM165 15v-2h1v2zM166 15v-4h1v4zM167 15v-3h1v3zM168 15v-3h1v3z" fill="#428f42"/></svg>
<span class="m g" style="right:1423px;top:562px">9.7%</span>
<svg style="left:60px;top:562px;background:#efefef" width="169" height="15" viewBox="0 0 169 15" shape-rendering="crispEdges"><path d="M0 15v-4h1v4zM1 15v-3h1v3zM2 15v-3h1v3zM3 15v-4h1v4zM4 15v-3h1v3zM5 15v-3h1v3zM6 15v-3h1v3zM7 15v-4h1v4zM8 15v-3h1v3zM9 15v-4h1v4zM10 15v-3h1v3zM11 15v-4h1v4zM12 15v-2h1v2zM13 15v-5h1v5zM14 15v-3h1v3zM15 15v-4h1v4zM16 15v-3h1v3zM17 15v-4h1v4zM18 15v-3h1v3zM19 15v-3h1v3zM20 15v-2h1v2zM21 15v-4h1v4zM22 15v-3h1v3zM23 15v-3h1v3zM24 15v-3h1v3zM25 15v-2h1v2zM26 15v-3h1v3zM27 15v-3h1v3zM28 15v-3h1v3zM29 15v-4h1v4zM30 15v-2h1v2zM31 15v-4h1v4zM32 15v-5h1v5zM33 15v-4h1v4zM34 15v-4h1v4zM35 15v-4h1v4zM36 15v-2h1v2zM37 15v-3h1v3zM38 15v-2h1v2zM39 15v-4h1v4zM40 15v-3h1v3zM41 15v-3h1v3zM42 15v-3h1v3zM43 15v-4h1v4zM44 15v-3h1v3zM45 15v-3h1v3zM46 15v-5h1v5zM47 15v-2h1v2zM48 15v-4h1v4zM49 15v-5h1v5zM50 15v-4h1v4zM51 15v-5h1v5zM52 15v-3h1v3zM53 15v-3h1v3zM54 15v-3h1v3zM55 15v-4h1v4zM56 15v-4h1v4zM57 15v-3h1v3zM58 15v-5h1v5zM59 15v-2h1v2zM60 15v-3h1v3zM61 15v-2h1v2zM62 15v-3h1v3zM63 15v-5h1v5zM64 15v-3h1v3zM65 15v-5h1v5zM66 15v-4h1v4zM67 15v-4h1v4zM68 15v-2h1v2zM69 15v-3h1v3zM70 15v-4h1v4zM71 15v-2h1v2zM72 15v-3h1v3zM73 15v-2h1v2zM74 15v-4h1v4zM75 15v-4h1v4zM76 15v-5h1v5zM77 15v-4h1v4zM78 15v-3h1v3zM79 15v-2h1v2zM80 15v-3h1v3zM81 15v-4h1v4zM82 15v-4h1v4zM83 15v-2h1v2zM84 15v-2h1v2zM85 15v-2h1v2zM86 15v-5h1v5zM87 15v-3h1v3zM88 15v-3h1v3zM89 15v-3h1v3zM90 15v-4h1v4zM91 15v-3h1v3zM92 15v-3h1v3zM93 15v-4h1v4zM94 15v-2h1v2zM95 15v-3h1v3zM96 15v-2h1v2zM97 15v-5h1v5zM98 15v-3h1v3zM99 15v-3h1v3zM100 15v-3h1v3zM101 15v-5h1v5zM102 15v-4h1v4zM103 15v-4h1v4zM104 15v-3h1v3zM105 15v-3h1v3zM106 15v-4h1v4zM107 15v-3h1v3zM108 15v-4h1v4zM109 15v-3h1v3zM110 15v-3h1v3zM111 15v-3h1v3zM112 15v-3h1v3zM113 15v-4h1v4zM114 15v-2h1v2zM115 15v-2h1v2zM116 15v-3h1v3zM117 15v-2h1v2zM118 15v-4h1v4zM119 15v-3h1v3zM120 15v-4h1v4zM121 15v-4h1v4zM122 15v-3h1v3zM123 15v-5h1v5zM124 15v-3h1v3zM125 15v-3h1v3zM126 15v-3h1v3zM127 15v-4h1v4zM128 15v-4h1v4zM129 15v-3h1v3zM130 15v-4h1v4zM131 15v-3h1v3zM132 15v-3h1v3zM135 15v-4h1v4zM136 15v-3h1v3zM137 15v-4h1v4zM138 15v-4h1v4zM139 15v-5h1v5zM140 15v-4h1v4zM141 15v-7h1v7zM142 15v-5h1v5zM143 15v-4h1v4zM144 15v-4h1v4zM145 15v-3h1v3zM146 15v-3h1v3zM147 15v-5h1v5zM148 15v-3h1v3zM149 15v-5h1v5zM150 15v-4h1v4zM151 15v-4h1v4zM152 15v-4h1v4zM153 15v-5h1v5zM154 15v-3h1v3zM155 15v-3h1v3zM156 15v-3h1v3zM157 15v-5h1v5zM160 15v-4h1v4zM161 15v-4h1v4zM162 15v-4h1v4zM163 15v-3h1v3zM164 15v-3h1v3zM165 15v-4h1v4zM166 15v-5h1v5zM167 15v-3h1v3zM168 15v-4h1v4z" fill="#428f42"/></svg>
<div style="left:1209px;top:307px;width:16px;height:292px;background-color:#fff;background-image:linear-gradient(45deg,#d4d0c8 25%,transparent 25%,transparent 75%,#d4d0c8 75%),linear-gradient(45deg,#d4d0c8 25%,transparent 25%,transparent 75%,#d4d0c8 75%);background-size:2px 2px;background-position:0 0,1px 1px;"></div>
<div style="left:1209px;top:307px;width:16px;height:16px;background:#d4d0c8;border-top:1px solid #d4d0c8;border-left:1px solid #d4d0c8;border-right:1px solid #000;border-bottom:1px solid #000;"></div>
<div style="left:1210px;top:308px;width:14px;height:14px;background:#d4d0c8;border-top:1px solid #fff;border-left:1px solid #fff;border-right:1px solid #808080;border-bottom:1px solid #808080;"></div>
<svg style="left:1213px;top:313px" width="8" height="4" viewBox="0 0 8 4"><path d="M0 4L3.5 0.3L7 4z" fill="#000"/></svg>
<div style="left:1209px;top:583px;width:16px;height:16px;background:#d4d0c8;border-top:1px solid #d4d0c8;border-left:1px solid #d4d0c8;border-right:1px solid #000;border-bottom:1px solid #000;"></div>
<div style="left:1210px;top:584px;width:14px;height:14px;background:#d4d0c8;border-top:1px solid #fff;border-left:1px solid #fff;border-right:1px solid #808080;border-bottom:1px solid #808080;"></div>
<svg style="left:1213px;top:589px" width="8" height="4" viewBox="0 0 8 4"><path d="M0 0L3.5 3.7L7 0z" fill="#000"/></svg>
<div style="left:1209px;top:474px;width:16px;height:45px;background:#d4d0c8;border-top:1px solid #d4d0c8;border-left:1px solid #d4d0c8;border-right:1px solid #000;border-bottom:1px solid #000;"></div>
<div style="left:1210px;top:475px;width:14px;height:43px;background:#d4d0c8;border-top:1px solid #fff;border-left:1px solid #fff;border-right:1px solid #808080;border-bottom:1px solid #808080;"></div>
<div style="left:1229px;top:283px;width:1px;height:318px;background:#808080;"></div>
<div style="left:1230px;top:283px;width:1px;height:318px;background:#000;"></div>
<div style="left:1231px;top:283px;width:250px;height:319px;background:#d4d0c8;border-left:1px solid #fff;border-top:1px solid #fff;"></div>
<span class="u" style="left:1233px;top:286px;">Time spent on line 69</span>
<svg style="left:1454px;top:287px" width="8" height="9" viewBox="0 0 8 9" shape-rendering="crispEdges"><path d="M1 5h4v3h-4z" fill="#e9e6df"/><path d="M2 0h6v2h-6zM7 2h1v4h-1zM6 5h1v1h-1zM2 2h1v1h-1zM0 3h6v2h-6zM0 5h1v4h-1zM5 5h1v4h-1zM0 8h6v1h-6z" fill="#000"/></svg>
<svg style="left:1469px;top:288px" width="8" height="7" viewBox="0 0 8 7"><path d="M0.800 0.500L7.200 6.500M7.200 0.500L0.800 6.500" stroke="#000" stroke-width="1.800" fill="none"/></svg>
<div style="left:1231px;top:302px;width:250px;height:300px;background:#d4d0c8;border-top:2px solid #6e6d68;border-left:1px solid #6e6d68;border-right:1px solid #fff;border-bottom:1px solid #fff;"></div>
<div style="left:1232px;top:304px;width:248px;height:297px;background:#d4d0c8;border-top:1px solid #000;border-left:1px solid #000;"></div>
<span class="b" style="left:1242px;top:314px;">Breakdown of the 12.1% time</span>
<span class="b" style="left:1242px;top:328px;letter-spacing:0.078px;">spent on this line:</span>
<span class="u" style="left:1245px;top:351px;letter-spacing:0.148px;">Executing instructions</span>
<span class="u" style="right:37.40000000000009px;top:351px;color:#8c8c8c;">0.0%</span>
<span class="u" style="left:1245px;top:371px;letter-spacing:0.029px;">Calling other functions</span>
<span class="u" style="right:37.40000000000009px;top:371px;color:#8c8c8c;">100.0%</span>
<span class="u" style="left:1245px;top:391px;letter-spacing:0.161px;">Executing Python code</span>
<span class="u" style="right:37.40000000000009px;top:391px;color:#e0708c;">0.0%</span>
<div style="left:1446px;top:373px;width:25px;height:10px;background:#808080;"></div>
<div style="left:0px;top:599px;width:1226px;height:1px;background:#fff;"></div>
<div style="left:0px;top:600px;width:1226px;height:1px;background:#716f69;"></div>
<div style="left:0px;top:602px;width:1481px;height:1px;background:#fff;"></div>
<div style="left:0px;top:606px;width:1481px;height:1px;background:#808080;"></div>
<div style="left:0px;top:607px;width:1481px;height:1px;background:#000;"></div>
<div style="left:0px;top:628px;width:1481px;height:1px;background:#fff;"></div>
<div style="left:0px;top:630px;width:1481px;height:1px;background:#fff;"></div>
<div style="left:2px;top:610px;width:102px;height:19px;background:#d4d0c8;border-top:1px solid #fff;border-bottom:1px solid #fff;border-left:1px solid #fff;border-right:2px solid #000;border-top-left-radius:2px;"></div>
<span class="u" style="left:12px;top:613px;letter-spacing:0.316px;">Input/Output</span>
<div style="left:105px;top:610px;width:94px;height:19px;background:#d4d0c8;border-top:1px solid #fff;border-bottom:1px solid #fff;border-left:1px solid #fff;border-right:1px solid #fff;border-top-left-radius:2px;"></div>
<span class="u" style="left:116px;top:613px;letter-spacing:-0.054px;">Project Files</span>
<div style="left:199px;top:608px;width:141px;height:22px;background:#d4d0c8;border-top:1px solid #fff;border-left:1px solid #fff;border-right:2px solid #000;border-top-left-radius:2px;border-top-right-radius:2px;"></div>
<span class="u" style="left:210px;top:612px;letter-spacing:0.049px;">Main Thread Stacks</span>
<div style="left:340px;top:610px;width:80px;height:19px;background:#d4d0c8;border-top:1px solid #fff;border-bottom:1px solid #fff;border-left:1px solid #fff;border-right:2px solid #000;border-top-left-radius:2px;"></div>
<span class="u" style="left:352px;top:613px;">Functions</span>
<span class="u" style="left:3px;top:633px;">Main Thread Stacks</span>
<svg style="left:1454px;top:634px" width="8" height="9" viewBox="0 0 8 9" shape-rendering="crispEdges"><path d="M1 5h4v3h-4z" fill="#e9e6df"/><path d="M2 0h6v2h-6zM7 2h1v4h-1zM6 5h1v1h-1zM2 2h1v1h-1zM0 3h6v2h-6zM0 5h1v4h-1zM5 5h1v4h-1zM0 8h6v1h-6z" fill="#000"/></svg>
<svg style="left:1469px;top:635px" width="8" height="7" viewBox="0 0 8 7"><path d="M0.800 0.500L7.200 6.500M7.200 0.500L0.800 6.500" stroke="#000" stroke-width="1.800" fill="none"/></svg>
<div style="left:0px;top:649px;width:1481px;height:202px;background:#fff;border-top:2px solid #6e6d68;border-left:1px solid #6e6d68;border-right:1px solid #fff;border-bottom:1px solid #fff;"></div>
<div style="left:1px;top:651px;width:1479px;height:199px;border-top:1px solid #000;border-left:1px solid #000;border-right:1px solid #d4d0c8;border-bottom:1px solid #d4d0c8;"></div>
<div style="left:2px;top:652px;width:229px;height:22px;background:#d4d0c8;border-top:1px solid #fff;border-left:1px solid #fff;border-right:1px solid #000;border-bottom:1px solid #000;"></div>
<div style="left:3px;top:653px;width:227px;height:20px;border-right:1px solid #808080;border-bottom:1px solid #808080;"></div>
<span class="u" style="left:6px;top:656px;">Total core time</span>
<div style="left:231px;top:652px;width:50px;height:22px;background:#d4d0c8;border-top:1px solid #fff;border-left:1px solid #fff;border-right:1px solid #000;border-bottom:1px solid #000;"></div>
<div style="left:232px;top:653px;width:48px;height:20px;border-right:1px solid #808080;border-bottom:1px solid #808080;"></div>
<span class="u" style="left:235px;top:656px;">MPI</span>
<div style="left:281px;top:652px;width:283px;height:22px;background:#d4d0c8;border-top:1px solid #fff;border-left:1px solid #fff;border-right:1px solid #000;border-bottom:1px solid #000;"></div>
<div style="left:282px;top:653px;width:281px;height:20px;border-right:1px solid #808080;border-bottom:1px solid #808080;"></div>
<span class="u" style="left:285px;top:656px;letter-spacing:0.085px;">Function(s) on line</span>
<div style="left:564px;top:652px;width:712px;height:22px;background:#d4d0c8;border-top:1px solid #fff;border-left:1px solid #fff;border-right:1px solid #000;border-bottom:1px solid #000;"></div>
<div style="left:565px;top:653px;width:710px;height:20px;border-right:1px solid #808080;border-bottom:1px solid #808080;"></div>
<span class="u" style="left:568px;top:656px;">Source</span>
<div style="left:1276px;top:652px;width:187px;height:22px;background:#d4d0c8;border-top:1px solid #fff;border-left:1px solid #fff;border-right:1px solid #000;border-bottom:1px solid #000;"></div>
<div style="left:1277px;top:653px;width:185px;height:20px;border-right:1px solid #808080;border-bottom:1px solid #808080;"></div>
<span class="u" style="left:1280px;top:656px;">Position</span>
<svg style="left:212px;top:657px" width="12" height="10" viewBox="0 0 12 10"><path d="M0.800 1h10l-5 8.300z" fill="none" stroke="#5a5a5a" stroke-width="1"/></svg>
<div style="left:231px;top:754px;width:50px;height:16px;background:#000080;"></div>
<div style="left:341px;top:754px;width:1122px;height:16px;background:#000080;"></div>
<div style="left:306px;top:719px;width:1px;height:131px;background-image:linear-gradient(#808080 50%,transparent 50%);background-size:1px 2px;"></div>
<div style="left:316px;top:735px;width:1px;height:115px;background-image:linear-gradient(#808080 50%,transparent 50%);background-size:1px 2px;"></div>
<div style="left:326px;top:751px;width:1px;height:99px;background-image:linear-gradient(#808080 50%,transparent 50%);background-size:1px 2px;"></div>
<div style="left:336px;top:755px;width:1px;height:95px;background-image:linear-gradient(#808080 50%,transparent 50%);background-size:1px 2px;"></div>
<div style="left:286px;top:675px;width:1px;height:1px;background:#808080;"></div>
<div style="left:286px;top:677px;width:1px;height:1px;background:#808080;"></div>
<svg style="left:282px;top:678px" width="9" height="9" viewBox="0 0 9 9" shape-rendering="crispEdges"><rect x="0.500" y="0.500" width="8" height="8" fill="#fff" stroke="#737373"/><path d="M2 4.500h5" stroke="#000"/></svg>
<svg style="left:296px;top:676px" width="13" height="13" viewBox="0 0 13 13"><g transform="rotate(-17 6.500 6.500)"><rect x="1.500" y="1.500" width="10" height="10" fill="#fbc3ad"/><rect x="2" y="2" width="4.500" height="4.500" fill="#fdf1ec"/><rect x="6.500" y="2" width="4.500" height="4.500" fill="#f4581f"/><rect x="2" y="6.500" width="4.500" height="4.500" fill="#f4581f"/><rect x="6.500" y="6.500" width="4.500" height="4.500" fill="#d9e0e3"/></g></svg>
<span class="u" style="left:316px;top:675px;letter-spacing:0.175px;">python3.6 [program]</span>
<div style="left:296px;top:691px;width:1px;height:1px;background:#808080;"></div>
<div style="left:296px;top:693px;width:1px;height:1px;background:#808080;"></div>
<svg style="left:292px;top:694px" width="9" height="9" viewBox="0 0 9 9" shape-rendering="crispEdges"><rect x="0.500" y="0.500" width="8" height="8" fill="#fff" stroke="#737373"/><path d="M2 4.500h5" stroke="#000"/></svg>
<svg style="left:306px;top:691px" width="13" height="14" viewBox="0 0 13 14"><path d="M1.800 12.300L11 2" stroke="#a3c6d4" stroke-width="2.400" stroke-linecap="butt"/><path d="M4.600 9.100L7.700 5.700" stroke="#f59a23" stroke-width="3.600"/></svg>
<span class="u" style="left:326px;top:691px;">scatter.py</span>
<span class="s" style="left:567px;top:690px;">import argparse</span>
<span class="u" style="left:1279px;top:691px;">scatter.py:1</span>
<div style="left:306px;top:707px;width:1px;height:1px;background:#808080;"></div>
<div style="left:306px;top:709px;width:1px;height:1px;background:#808080;"></div>
<svg style="left:302px;top:710px" width="9" height="9" viewBox="0 0 9 9" shape-rendering="crispEdges"><rect x="0.500" y="0.500" width="8" height="8" fill="#fff" stroke="#737373"/><path d="M2 4.500h5" stroke="#000"/></svg>
<span class="u" style="left:314px;top:707px;">computeField</span>
<span class="s" style="left:567px;top:706px;">inci[i0], scat[i0] = computeField(indx)</span>
<span class="u" style="left:1279px;top:707px;">scatter.py:116</span>
<div style="left:316px;top:723px;width:1px;height:1px;background:#808080;"></div>
<div style="left:316px;top:725px;width:1px;height:1px;background:#808080;"></div>
<svg style="left:312px;top:726px" width="9" height="9" viewBox="0 0 9 9" shape-rendering="crispEdges"><rect x="0.500" y="0.500" width="8" height="8" fill="#fff" stroke="#737373"/><path d="M2 4.500h5" stroke="#000"/></svg>
<span class="u" style="left:324px;top:723px;">computeScatteredWave</span>
<span class="s" style="left:567px;top:722px;">scat_val = wave.computeScatteredWave(kvec, xc, yc, p)</span>
<span class="u" style="left:1279px;top:723px;">scatter.py:83</span>
<div style="left:326px;top:739px;width:1px;height:1px;background:#808080;"></div>
<div style="left:326px;top:741px;width:1px;height:1px;background:#808080;"></div>
<svg style="left:322px;top:742px" width="9" height="9" viewBox="0 0 9 9" shape-rendering="crispEdges"><rect x="0.500" y="0.500" width="8" height="8" fill="#fff" stroke="#737373"/><path d="M2 4.500h5" stroke="#000"/></svg>
<span class="u" style="left:334px;top:739px;letter-spacing:0.085px;">computeScatteredWaveElement</span>
<span class="s" style="left:567px;top:738px;">res += computeScatteredWaveElement(kvec, p0, p1, point)</span>
<span class="u" style="left:1279px;top:739px;">wave.py:99</span>
<svg style="left:332px;top:758px" width="9" height="9" viewBox="0 0 9 9" shape-rendering="crispEdges"><rect x="0.500" y="0.500" width="8" height="8" fill="#fff" stroke="#737373"/><path d="M2 4.500h5M4.500 2v5" stroke="#000"/></svg>
<span class="u" style="left:344px;top:755px;color:#fff;letter-spacing:0.223px;">gradIncident</span>
<span class="s" style="left:567px;top:754px;color:#fff;">scattered_wave = - dsdt * g * gradIncident(nvec, kvec, pmid)</span>
<span class="u" style="left:1279px;top:755px;color:#fff;">wave.py:69</span>
<span class="u" style="right:1421.5px;top:755px;">12.1%</span>
<svg style="left:61px;top:754px;background:#efefef" width="168" height="15" viewBox="0 0 168 15" shape-rendering="crispEdges"><path d="M0 15v-4h1v4zM1 15v-3h1v3zM2 15v-4h1v4zM3 15v-5h1v5zM4 15v-3h1v3zM5 15v-4h1v4zM6 15v-3h1v3zM7 15v-3h1v3zM8 15v-3h1v3zM9 15v-4h1v4zM10 15v-3h1v3zM11 15v-4h1v4zM12 15v-3h1v3zM13 15v-3h1v3zM14 15v-3h1v3zM15 15v-3h1v3zM16 15v-3h1v3zM17 15v-4h1v4zM18 15v-5h1v5zM19 15v-3h1v3zM20 15v-5h1v5zM21 15v-4h1v4zM22 15v-5h1v5zM23 15v-4h1v4zM24 15v-3h1v3zM25 15v-3h1v3zM26 15v-5h1v5zM27 15v-9h1v9zM28 15v-5h1v5zM29 15v-3h1v3zM30 15v-4h1v4zM31 15v-4h1v4zM32 15v-3h1v3zM33 15v-4h1v4zM34 15v-4h1v4zM35 15v-5h1v5zM36 15v-5h1v5zM37 15v-4h1v4zM38 15v-3h1v3zM39 15v-4h1v4zM40 15v-3h1v3zM41 15v-4h1v4zM42 15v-3h1v3zM43 15v-3h1v3zM44 15v-4h1v4zM45 15v-4h1v4zM46 15v-3h1v3zM47 15v-4h1v4zM48 15v-3h1v3zM49 15v-3h1v3zM50 15v-4h1v4zM51 15v-3h1v3zM52 15v-5h1v5zM53 15v-3h1v3zM54 15v-4h1v4zM55 15v-3h1v3zM56 15v-3h1v3zM57 15v-4h1v4zM58 15v-4h1v4zM59 15v-3h1v3zM60 15v-3h1v3zM61 15v-4h1v4zM62 15v-3h1v3zM63 15v-4h1v4zM64 15v-3h1v3zM65 15v-4h1v4zM66 15v-3h1v3zM67 15v-3h1v3zM68 15v-2h1v2zM69 15v-4h1v4zM70 15v-2h1v2zM71 15v-3h1v3zM72 15v-3h1v3zM73 15v-4h1v4zM74 15v-4h1v4zM75 15v-3h1v3zM76 15v-3h1v3zM77 15v-4h1v4zM78 15v-3h1v3zM79 15v-3h1v3zM80 15v-4h1v4zM81 15v-3h1v3zM82 15v-4h1v4zM83 15v-2h1v2zM84 15v-4h1v4zM85 15v-3h1v3zM86 15v-3h1v3zM87 15v-4h1v4zM88 15v-4h1v4zM89 15v-3h1v3zM90 15v-9h1v9zM91 15v-3h1v3zM92 15v-4h1v4zM93 15v-3h1v3zM94 15v-4h1v4zM95 15v-3h1v3zM96 15v-4h1v4zM97 15v-4h1v4zM98 15v-3h1v3zM99 15v-3h1v3zM100 15v-2h1v2zM101 15v-3h1v3zM102 15v-4h1v4zM103 15v-4h1v4zM104 15v-3h1v3zM105 15v-2h1v2zM106 15v-4h1v4zM107 15v-4h1v4zM108 15v-4h1v4zM109 15v-4h1v4zM110 15v-4h1v4zM111 15v-3h1v3zM112 15v-3h1v3zM113 15v-3h1v3zM114 15v-4h1v4zM115 15v-3h1v3zM116 15v-4h1v4zM117 15v-3h1v3zM118 15v-3h1v3zM119 15v-2h1v2zM120 15v-3h1v3zM121 15v-4h1v4zM122 15v-4h1v4zM123 15v-4h1v4zM124 15v-2h1v2zM125 15v-4h1v4zM126 15v-3h1v3zM127 15v-3h1v3zM128 15v-5h1v5zM129 15v-4h1v4zM130 15v-3h1v3zM131 15v-4h1v4zM132 15v-3h1v3zM133 15v-3h1v3zM134 15v-3h1v3zM135 15v-3h1v3zM136 15v-2h1v2zM137 15v-4h1v4zM138 15v-3h1v3zM139 15v-3h1v3zM140 15v-3h1v3zM141 15v-3h1v3zM142 15v-2h1v2zM143 15v-2h1v2zM144 15v-3h1v3zM145 15v-4h1v4zM146 15v-4h1v4zM147 15v-4h1v4zM148 15v-2h1v2zM149 15v-3h1v3zM150 15v-4h1v4zM151 15v-4h1v4zM152 15v-3h1v3zM153 15v-2h1v2zM154 15v-3h1v3zM155 15v-5h1v5zM156 15v-4h1v4zM157 15v-4h1v4zM158 15v-3h1v3zM159 15v-4h1v4zM160 15v-3h1v3zM161 15v-3h1v3zM162 15v-4h1v4zM163 15v-3h1v3zM164 15v-2h1v2zM165 15v-4h1v4zM166 15v-4h1v4zM167 15v-3h1v3z" fill="#428f42"/></svg>
<svg style="left:332px;top:774px" width="9" height="9" viewBox="0 0 9 9" shape-rendering="crispEdges"><rect x="0.500" y="0.500" width="8" height="8" fill="#fff" stroke="#737373"/><path d="M2 4.500h5M4.500 2v5" stroke="#000"/></svg>
<span class="u" style="left:344px;top:771px;letter-spacing:-0.017px;">incident, Py_Main</span>
<span class="s" style="left:567px;top:770px;">scattered_wave += shadow * dsdt * dgdn * incident(kvec, pmid)</span>
<span class="u" style="left:1279px;top:771px;">wave.py:77</span>
<span class="u" style="right:1421.5px;top:771px;">9.7%</span>
<svg style="left:61px;top:770px;background:#efefef" width="168" height="15" viewBox="0 0 168 15" shape-rendering="crispEdges"><path d="M0 15v-4h1v4zM1 15v-4h1v4zM2 15v-2h1v2zM3 15v-5h1v5zM4 15v-4h1v4zM5 15v-2h1v2zM6 15v-4h1v4zM7 15v-4h1v4zM8 15v-3h1v3zM9 15v-5h1v5zM10 15v-3h1v3zM11 15v-3h1v3zM12 15v-4h1v4zM13 15v-4h1v4zM14 15v-4h1v4zM15 15v-3h1v3zM16 15v-3h1v3zM17 15v-3h1v3zM18 15v-3h1v3zM19 15v-3h1v3zM20 15v-2h1v2zM21 15v-3h1v3zM22 15v-4h1v4zM23 15v-3h1v3zM24 15v-3h1v3zM25 15v-2h1v2zM26 15v-4h1v4zM27 15v-3h1v3zM28 15v-3h1v3zM29 15v-4h1v4zM30 15v-3h1v3zM31 15v-3h1v3zM32 15v-4h1v4zM33 15v-3h1v3zM34 15v-3h1v3zM35 15v-3h1v3zM36 15v-3h1v3zM37 15v-3h1v3zM38 15v-3h1v3zM39 15v-3h1v3zM40 15v-4h1v4zM41 15v-3h1v3zM42 15v-3h1v3zM43 15v-3h1v3zM44 15v-3h1v3zM45 15v-4h1v4zM46 15v-5h1v5zM47 15v-4h1v4zM48 15v-5h1v5zM49 15v-3h1v3zM50 15v-3h1v3zM51 15v-3h1v3zM52 15v-4h1v4zM53 15v-3h1v3zM54 15v-3h1v3zM55 15v-3h1v3zM56 15v-4h1v4zM57 15v-4h1v4zM58 15v-4h1v4zM59 15v-3h1v3zM60 15v-4h1v4zM61 15v-4h1v4zM62 15v-3h1v3zM63 15v-2h1v2zM64 15v-2h1v2zM65 15v-3h1v3zM66 15v-4h1v4zM67 15v-3h1v3zM68 15v-4h1v4zM69 15v-3h1v3zM70 15v-4h1v4zM71 15v-3h1v3zM72 15v-4h1v4zM73 15v-4h1v4zM74 15v-3h1v3zM75 15v-3h1v3zM76 15v-3h1v3zM77 15v-4h1v4zM78 15v-4h1v4zM79 15v-2h1v2zM80 15v-4h1v4zM81 15v-3h1v3zM82 15v-4h1v4zM83 15v-3h1v3zM84 15v-3h1v3zM85 15v-3h1v3zM86 15v-3h1v3zM87 15v-3h1v3zM88 15v-3h1v3zM89 15v-3h1v3zM90 15v-3h1v3zM91 15v-2h1v2zM92 15v-5h1v5zM93 15v-3h1v3zM94 15v-3h1v3zM95 15v-3h1v3zM96 15v-4h1v4zM97 15v-2h1v2zM98 15v-3h1v3zM99 15v-4h1v4zM100 15v-3h1v3zM101 15v-4h1v4zM102 15v-4h1v4zM103 15v-3h1v3zM104 15v-4h1v4zM105 15v-4h1v4zM106 15v-4h1v4zM107 15v-3h1v3zM108 15v-4h1v4zM109 15v-2h1v2zM110 15v-3h1v3zM111 15v-3h1v3zM112 15v-3h1v3zM113 15v-4h1v4zM114 15v-3h1v3zM115 15v-2h1v2zM116 15v-3h1v3zM117 15v-3h1v3zM118 15v-4h1v4zM119 15v-3h1v3zM120 15v-4h1v4zM121 15v-3h1v3zM123 15v-4h1v4zM124 15v-4h1v4zM125 15v-3h1v3zM126 15v-2h1v2zM127 15v-4h1v4zM128 15v-3h1v3zM129 15v-4h1v4zM130 15v-3h1v3zM131 15v-3h1v3zM132 15v-4h1v4zM133 15v-3h1v3zM134 15v-4h1v4zM135 15v-3h1v3zM136 15v-4h1v4zM137 15v-5h1v5zM138 15v-4h1v4zM139 15v-3h1v3zM140 15v-5h1v5zM141 15v-3h1v3zM142 15v-3h1v3zM143 15v-3h1v3zM144 15v-2h1v2zM147 15v-3h1v3zM148 15v-4h1v4zM149 15v-3h1v3zM150 15v-2h1v2zM151 15v-4h1v4zM152 15v-2h1v2zM153 15v-4h1v4zM154 15v-3h1v3zM155 15v-3h1v3zM156 15v-4h1v4zM157 15v-2h1v2zM158 15v-3h1v3zM159 15v-3h1v3zM160 15v-3h1v3zM161 15v-3h1v3zM162 15v-3h1v3zM163 15v-4h1v4zM164 15v-5h1v5zM165 15v-4h1v4z" fill="#428f42"/></svg>
<svg style="left:332px;top:790px" width="9" height="9" viewBox="0 0 9 9" shape-rendering="crispEdges"><rect x="0.500" y="0.500" width="8" height="8" fill="#fff" stroke="#737373"/><path d="M2 4.500h5M4.500 2v5" stroke="#000"/></svg>
<span class="u" style="left:344px;top:787px;letter-spacing:-0.075px;">Py_Main, _PyEval_EvalFrameDefau...</span>
<span class="s" style="left:567px;top:786px;">dgdn = (-1j/4.) * hankel1(1, kr) * kmod * nvec.dot(rvec) / r</span>
<span class="u" style="left:1279px;top:787px;">wave.py:64</span>
<span class="u" style="right:1421.5px;top:787px;">9.1%</span>
<svg style="left:61px;top:786px;background:#efefef" width="168" height="15" viewBox="0 0 168 15" shape-rendering="crispEdges"><path d="M0 15v-3h1v3zM1 15v-4h1v4zM2 15v-5h1v5zM3 15v-4h1v4zM4 15v-3h1v3zM5 15v-3h1v3zM6 15v-3h1v3zM7 15v-6h1v6zM8 15v-3h1v3zM9 15v-4h1v4zM10 15v-4h1v4zM11 15v-4h1v4zM12 15v-3h1v3zM13 15v-3h1v3zM14 15v-3h1v3zM15 15v-4h1v4zM16 15v-5h1v5zM17 15v-4h1v4zM18 15v-3h1v3zM19 15v-3h1v3zM20 15v-2h1v2zM21 15v-3h1v3zM22 15v-3h1v3zM23 15v-3h1v3zM24 15v-3h1v3zM25 15v-3h1v3zM26 15v-3h1v3zM27 15v-4h1v4zM28 15v-3h1v3zM29 15v-4h1v4zM30 15v-3h1v3zM31 15v-3h1v3zM32 15v-3h1v3zM33 15v-4h1v4zM34 15v-4h1v4zM35 15v-4h1v4zM36 15v-4h1v4zM37 15v-4h1v4zM38 15v-3h1v3zM39 15v-3h1v3zM40 15v-3h1v3zM41 15v-4h1v4zM42 15v-4h1v4zM43 15v-4h1v4zM44 15v-4h1v4zM45 15v-5h1v5zM46 15v-4h1v4zM47 15v-4h1v4zM48 15v-4h1v4zM49 15v-3h1v3zM50 15v-4h1v4zM51 15v-4h1v4zM52 15v-3h1v3zM53 15v-3h1v3zM54 15v-3h1v3zM55 15v-4h1v4zM56 15v-3h1v3zM57 15v-3h1v3zM58 15v-3h1v3zM59 15v-4h1v4zM60 15v-4h1v4zM61 15v-5h1v5zM62 15v-5h1v5zM63 15v-2h1v2zM64 15v-3h1v3zM65 15v-4h1v4zM66 15v-3h1v3zM67 15v-4h1v4zM68 15v-3h1v3zM69 15v-3h1v3zM70 15v-4h1v4zM71 15v-4h1v4zM72 15v-4h1v4zM73 15v-4h1v4zM74 15v-5h1v5zM75 15v-4h1v4zM76 15v-4h1v4zM77 15v-4h1v4zM78 15v-5h1v5zM79 15v-3h1v3zM80 15v-3h1v3zM81 15v-3h1v3zM82 15v-4h1v4zM83 15v-5h1v5zM84 15v-4h1v4zM85 15v-3h1v3zM86 15v-2h1v2zM87 15v-3h1v3zM88 15v-2h1v2zM89 15v-3h1v3zM90 15v-2h1v2zM91 15v-3h1v3zM92 15v-3h1v3zM93 15v-5h1v5zM94 15v-3h1v3zM95 15v-2h1v2zM96 15v-4h1v4zM97 15v-5h1v5zM98 15v-3h1v3zM99 15v-3h1v3zM100 15v-3h1v3zM101 15v-3h1v3zM102 15v-3h1v3zM103 15v-3h1v3zM104 15v-5h1v5zM105 15v-4h1v4zM106 15v-4h1v4zM107 15v-3h1v3zM108 15v-4h1v4zM109 15v-2h1v2zM110 15v-4h1v4zM111 15v-2h1v2zM112 15v-4h1v4zM113 15v-3h1v3zM114 15v-5h1v5zM115 15v-4h1v4zM116 15v-3h1v3zM117 15v-4h1v4zM118 15v-4h1v4zM119 15v-3h1v3zM120 15v-4h1v4zM121 15v-4h1v4zM122 15v-3h1v3zM123 15v-4h1v4zM124 15v-3h1v3zM125 15v-2h1v2zM126 15v-3h1v3zM127 15v-3h1v3zM128 15v-4h1v4zM129 15v-4h1v4zM130 15v-3h1v3zM131 15v-3h1v3zM132 15v-2h1v2zM133 15v-3h1v3zM134 15v-4h1v4zM135 15v-4h1v4zM136 15v-5h1v5zM137 15v-4h1v4zM138 15v-3h1v3zM139 15v-4h1v4zM142 15v-3h1v3zM143 15v-4h1v4zM145 15v-3h1v3zM146 15v-3h1v3zM147 15v-3h1v3zM148 15v-4h1v4zM149 15v-5h1v5zM150 15v-2h1v2zM151 15v-4h1v4zM152 15v-3h1v3zM153 15v-4h1v4zM154 15v-4h1v4zM155 15v-5h1v5zM156 15v-5h1v5zM157 15v-4h1v4zM158 15v-3h1v3zM159 15v-4h1v4zM162 15v-3h1v3zM163 15v-4h1v4zM164 15v-3h1v3zM165 15v-3h1v3zM166 15v-3h1v3zM167 15v-3h1v3z" fill="#428f42"/></svg>
<svg style="left:332px;top:806px" width="9" height="9" viewBox="0 0 9 9" shape-rendering="crispEdges"><rect x="0.500" y="0.500" width="8" height="8" fill="#fff" stroke="#737373"/><path d="M2 4.500h5M4.500 2v5" stroke="#000"/></svg>
<span class="u" style="left:344px;top:803px;letter-spacing:-0.083px;">Py_Main, _PyEval_EvalFrameDefault</span>
<span class="s" style="left:567px;top:802px;">nvec /= numpy.sqrt(nvec.dot(nvec))</span>
<span class="u" style="left:1279px;top:803px;">wave.py:53</span>
<span class="u" style="right:1421.5px;top:803px;">8.1%</span>
<svg style="left:61px;top:802px;background:#efefef" width="168" height="15" viewBox="0 0 168 15" shape-rendering="crispEdges"><path d="M0 15v-2h1v2zM1 15v-3h1v3zM2 15v-3h1v3zM3 15v-2h1v2zM4 15v-2h1v2zM5 15v-2h1v2zM6 15v-1h1v1zM7 15v-2h1v2zM8 15v-2h1v2zM9 15v-3h1v3zM10 15v-2h1v2zM11 15v-2h1v2zM12 15v-4h1v4zM13 15v-3h1v3zM14 15v-2h1v2zM15 15v-2h1v2zM16 15v-4h1v4zM17 15v-2h1v2zM18 15v-3h1v3zM19 15v-3h1v3zM20 15v-3h1v3zM21 15v-1h1v1zM22 15v-3h1v3zM23 15v-3h1v3zM24 15v-2h1v2zM25 15v-2h1v2zM26 15v-3h1v3zM27 15v-4h1v4zM28 15v-4h1v4zM29 15v-2h1v2zM30 15v-3h1v3zM31 15v-2h1v2zM32 15v-4h1v4zM33 15v-4h1v4zM34 15v-2h1v2zM35 15v-3h1v3zM36 15v-3h1v3zM37 15v-2h1v2zM38 15v-2h1v2zM39 15v-4h1v4zM40 15v-2h1v2zM41 15v-2h1v2zM42 15v-3h1v3zM43 15v-2h1v2zM44 15v-3h1v3zM45 15v-2h1v2zM46 15v-3h1v3zM47 15v-2h1v2zM48 15v-1h1v1zM49 15v-3h1v3zM50 15v-3h1v3zM51 15v-3h1v3zM52 15v-2h1v2zM53 15v-2h1v2zM54 15v-2h1v2zM55 15v-3h1v3zM56 15v-3h1v3zM57 15v-3h1v3zM58 15v-2h1v2zM59 15v-2h1v2zM60 15v-1h1v1zM61 15v-4h1v4zM62 15v-3h1v3zM63 15v-2h1v2zM64 15v-3h1v3zM65 15v-2h1v2zM66 15v-2h1v2zM67 15v-3h1v3zM68 15v-3h1v3zM69 15v-2h1v2zM70 15v-2h1v2zM71 15v-2h1v2zM72 15v-2h1v2zM73 15v-2h1v2zM74 15v-2h1v2zM75 15v-2h1v2zM76 15v-4h1v4zM77 15v-3h1v3zM78 15v-2h1v2zM80 15v-4h1v4zM81 15v-2h1v2zM82 15v-2h1v2zM83 15v-3h1v3zM84 15v-3h1v3zM85 15v-2h1v2zM86 15v-1h1v1zM87 15v-2h1v2zM88 15v-8h1v8zM89 15v-1h1v1zM90 15v-2h1v2zM91 15v-3h1v3zM92 15v-3h1v3zM93 15v-3h1v3zM94 15v-3h1v3zM95 15v-3h1v3zM96 15v-2h1v2zM97 15v-2h1v2zM98 15v-4h1v4zM99 15v-3h1v3zM100 15v-3h1v3zM101 15v-3h1v3zM102 15v-3h1v3zM103 15v-3h1v3zM104 15v-2h1v2zM105 15v-2h1v2zM106 15v-4h1v4zM107 15v-4h1v4zM108 15v-2h1v2zM109 15v-2h1v2zM110 15v-4h1v4zM111 15v-2h1v2zM112 15v-4h1v4zM113 15v-1h1v1zM114 15v-3h1v3zM115 15v-2h1v2zM116 15v-3h1v3zM117 15v-3h1v3zM118 15v-2h1v2zM119 15v-2h1v2zM120 15v-3h1v3zM121 15v-2h1v2zM122 15v-2h1v2zM123 15v-2h1v2zM124 15v-4h1v4zM125 15v-3h1v3zM126 15v-2h1v2zM127 15v-3h1v3zM128 15v-4h1v4zM129 15v-2h1v2zM130 15v-2h1v2zM131 15v-1h1v1zM132 15v-1h1v1zM133 15v-2h1v2zM134 15v-3h1v3zM137 15v-1h1v1zM138 15v-1h1v1zM139 15v-3h1v3zM140 15v-3h1v3zM141 15v-3h1v3zM142 15v-4h1v4zM143 15v-2h1v2zM144 15v-3h1v3zM145 15v-2h1v2zM146 15v-3h1v3zM147 15v-3h1v3zM148 15v-3h1v3zM149 15v-2h1v2zM150 15v-2h1v2zM151 15v-2h1v2zM152 15v-1h1v1zM153 15v-4h1v4zM154 15v-4h1v4zM155 15v-2h1v2zM156 15v-3h1v3zM157 15v-3h1v3zM158 15v-3h1v3zM159 15v-2h1v2zM160 15v-2h1v2zM161 15v-3h1v3zM162 15v-2h1v2zM163 15v-1h1v1zM164 15v-2h1v2zM167 15v-4h1v4z" fill="#428f42"/></svg>
<svg style="left:332px;top:822px" width="9" height="9" viewBox="0 0 9 9" shape-rendering="crispEdges"><rect x="0.500" y="0.500" width="8" height="8" fill="#fff" stroke="#737373"/><path d="M2 4.500h5M4.500 2v5" stroke="#000"/></svg>
<span class="u" style="left:344px;top:819px;letter-spacing:-0.241px;">Py_Main</span>
<span class="s" style="left:567px;top:818px;">shadow = 2*((nvec.dot(kvec) &gt; 0.) - 0.5) # +1 on the shadow side, -1 on the illuminated side</span>
<span class="u" style="left:1279px;top:819px;">wave.py:76</span>
<span class="u" style="right:1421.5px;top:819px;">6.4%</span>
<svg style="left:61px;top:818px;background:#efefef" width="168" height="15" viewBox="0 0 168 15" shape-rendering="crispEdges"><path d="M0 15v-2h1v2zM1 15v-2h1v2zM2 15v-2h1v2zM3 15v-2h1v2zM4 15v-2h1v2zM5 15v-4h1v4zM6 15v-2h1v2zM7 15v-2h1v2zM8 15v-3h1v3zM10 15v-2h1v2zM11 15v-3h1v3zM13 15v-3h1v3zM14 15v-3h1v3zM15 15v-2h1v2zM16 15v-2h1v2zM17 15v-1h1v1zM18 15v-2h1v2zM19 15v-3h1v3zM20 15v-3h1v3zM21 15v-3h1v3zM22 15v-2h1v2zM23 15v-3h1v3zM24 15v-4h1v4zM25 15v-3h1v3zM26 15v-3h1v3zM27 15v-2h1v2zM28 15v-2h1v2zM29 15v-2h1v2zM30 15v-1h1v1zM31 15v-4h1v4zM32 15v-2h1v2zM33 15v-2h1v2zM34 15v-2h1v2zM35 15v-4h1v4zM36 15v-3h1v3zM37 15v-3h1v3zM38 15v-3h1v3zM39 15v-2h1v2zM40 15v-3h1v3zM41 15v-3h1v3zM42 15v-3h1v3zM43 15v-1h1v1zM44 15v-2h1v2zM45 15v-3h1v3zM48 15v-3h1v3zM49 15v-2h1v2zM50 15v-2h1v2zM51 15v-3h1v3zM52 15v-3h1v3zM53 15v-2h1v2zM54 15v-2h1v2zM55 15v-3h1v3zM56 15v-2h1v2zM57 15v-3h1v3zM58 15v-3h1v3zM59 15v-2h1v2zM60 15v-2h1v2zM61 15v-2h1v2zM62 15v-3h1v3zM63 15v-3h1v3zM64 15v-3h1v3zM65 15v-2h1v2zM66 15v-1h1v1zM67 15v-2h1v2zM68 15v-2h1v2zM69 15v-3h1v3zM70 15v-2h1v2zM71 15v-3h1v3zM73 15v-2h1v2zM74 15v-2h1v2zM75 15v-3h1v3zM77 15v-3h1v3zM78 15v-2h1v2zM79 15v-2h1v2zM80 15v-4h1v4zM81 15v-3h1v3zM82 15v-3h1v3zM83 15v-3h1v3zM84 15v-4h1v4zM85 15v-3h1v3zM86 15v-1h1v1zM87 15v-1h1v1zM88 15v-1h1v1zM89 15v-3h1v3zM90 15v-2h1v2zM91 15v-3h1v3zM92 15v-1h1v1zM93 15v-2h1v2zM94 15v-3h1v3zM95 15v-3h1v3zM96 15v-2h1v2zM97 15v-2h1v2zM98 15v-3h1v3zM99 15v-3h1v3zM100 15v-2h1v2zM101 15v-4h1v4zM102 15v-2h1v2zM103 15v-2h1v2zM104 15v-3h1v3zM105 15v-3h1v3zM106 15v-3h1v3zM107 15v-1h1v1zM108 15v-2h1v2zM109 15v-2h1v2zM110 15v-1h1v1zM111 15v-3h1v3zM112 15v-2h1v2zM113 15v-2h1v2zM114 15v-3h1v3zM115 15v-3h1v3zM117 15v-3h1v3zM118 15v-3h1v3zM119 15v-2h1v2zM120 15v-2h1v2zM121 15v-4h1v4zM122 15v-2h1v2zM123 15v-3h1v3zM124 15v-1h1v1zM125 15v-2h1v2zM126 15v-3h1v3zM127 15v-2h1v2zM128 15v-8h1v8zM129 15v-1h1v1zM132 15v-1h1v1zM133 15v-3h1v3zM134 15v-3h1v3zM135 15v-3h1v3zM136 15v-3h1v3zM138 15v-2h1v2zM139 15v-4h1v4zM140 15v-3h1v3zM141 15v-2h1v2zM142 15v-3h1v3zM145 15v-3h1v3zM146 15v-2h1v2zM147 15v-2h1v2zM148 15v-3h1v3zM149 15v-2h1v2zM153 15v-2h1v2zM154 15v-3h1v3zM155 15v-1h1v1zM156 15v-3h1v3zM157 15v-4h1v4zM158 15v-3h1v3zM159 15v-2h1v2zM161 15v-3h1v3zM162 15v-5h1v5zM163 15v-2h1v2zM164 15v-1h1v1zM165 15v-1h1v1zM166 15v-4h1v4zM167 15v-2h1v2z" fill="#428f42"/></svg>
<svg style="left:332px;top:838px" width="9" height="9" viewBox="0 0 9 9" shape-rendering="crispEdges"><rect x="0.500" y="0.500" width="8" height="8" fill="#fff" stroke="#737373"/><path d="M2 4.500h5M4.500 2v5" stroke="#000"/></svg>
<span class="u" style="left:344px;top:835px;letter-spacing:-0.101px;">_PyEval_EvalFrameDefault, Py_Main</span>
<span class="s" style="left:567px;top:834px;">g = (1j/4.) * hankel1(0, kr)</span>
<span class="u" style="left:1279px;top:835px;">wave.py:63</span>
<span class="u" style="right:1421.5px;top:835px;">6.3%</span>
<svg style="left:61px;top:834px;background:#efefef" width="168" height="15" viewBox="0 0 168 15" shape-rendering="crispEdges"><path d="M0 15v-4h1v4zM1 15v-2h1v2zM2 15v-3h1v3zM3 15v-2h1v2zM4 15v-2h1v2zM5 15v-2h1v2zM6 15v-2h1v2zM7 15v-1h1v1zM8 15v-2h1v2zM9 15v-2h1v2zM10 15v-1h1v1zM11 15v-3h1v3zM12 15v-3h1v3zM13 15v-2h1v2zM14 15v-3h1v3zM15 15v-2h1v2zM16 15v-2h1v2zM17 15v-3h1v3zM18 15v-3h1v3zM19 15v-2h1v2zM20 15v-2h1v2zM21 15v-2h1v2zM22 15v-8h1v8zM24 15v-2h1v2zM25 15v-3h1v3zM26 15v-4h1v4zM27 15v-3h1v3zM30 15v-2h1v2zM31 15v-2h1v2zM32 15v-3h1v3zM33 15v-2h1v2zM34 15v-2h1v2zM35 15v-2h1v2zM36 15v-2h1v2zM37 15v-3h1v3zM38 15v-4h1v4zM39 15v-3h1v3zM40 15v-1h1v1zM41 15v-2h1v2zM42 15v-2h1v2zM43 15v-2h1v2zM44 15v-2h1v2zM45 15v-2h1v2zM46 15v-2h1v2zM47 15v-3h1v3zM48 15v-2h1v2zM49 15v-2h1v2zM50 15v-1h1v1zM51 15v-4h1v4zM52 15v-2h1v2zM53 15v-3h1v3zM54 15v-2h1v2zM55 15v-1h1v1zM56 15v-6h1v6zM57 15v-2h1v2zM58 15v-4h1v4zM59 15v-2h1v2zM60 15v-2h1v2zM61 15v-1h1v1zM62 15v-1h1v1zM63 15v-3h1v3zM64 15v-3h1v3zM65 15v-3h1v3zM66 15v-2h1v2zM67 15v-3h1v3zM68 15v-4h1v4zM69 15v-5h1v5zM70 15v-2h1v2zM71 15v-3h1v3zM72 15v-2h1v2zM73 15v-3h1v3zM74 15v-1h1v1zM76 15v-3h1v3zM77 15v-3h1v3zM78 15v-2h1v2zM79 15v-2h1v2zM80 15v-1h1v1zM81 15v-4h1v4zM82 15v-1h1v1zM83 15v-2h1v2zM84 15v-2h1v2zM85 15v-3h1v3zM86 15v-2h1v2zM87 15v-6h1v6zM90 15v-3h1v3zM91 15v-2h1v2zM92 15v-2h1v2zM93 15v-8h1v8zM94 15v-2h1v2zM95 15v-3h1v3zM96 15v-3h1v3zM97 15v-2h1v2zM98 15v-2h1v2zM99 15v-2h1v2zM100 15v-4h1v4zM101 15v-2h1v2zM102 15v-2h1v2zM103 15v-2h1v2zM105 15v-1h1v1zM106 15v-2h1v2zM107 15v-2h1v2zM109 15v-2h1v2zM110 15v-2h1v2zM111 15v-2h1v2zM112 15v-2h1v2zM115 15v-3h1v3zM116 15v-2h1v2zM117 15v-2h1v2zM118 15v-4h1v4zM119 15v-1h1v1zM121 15v-2h1v2zM122 15v-1h1v1zM123 15v-2h1v2zM124 15v-3h1v3zM125 15v-2h1v2zM126 15v-3h1v3zM127 15v-2h1v2zM128 15v-3h1v3zM129 15v-2h1v2zM130 15v-3h1v3zM131 15v-3h1v3zM132 15v-3h1v3zM133 15v-3h1v3zM134 15v-3h1v3zM135 15v-3h1v3zM136 15v-2h1v2zM137 15v-2h1v2zM138 15v-4h1v4zM139 15v-4h1v4zM140 15v-2h1v2zM141 15v-3h1v3zM142 15v-2h1v2zM143 15v-2h1v2zM144 15v-4h1v4zM145 15v-2h1v2zM146 15v-3h1v3zM147 15v-2h1v2zM148 15v-3h1v3zM149 15v-2h1v2zM151 15v-3h1v3zM152 15v-3h1v3zM153 15v-3h1v3zM154 15v-2h1v2zM155 15v-2h1v2zM156 15v-2h1v2zM157 15v-2h1v2zM158 15v-3h1v3zM159 15v-2h1v2zM163 15v-5h1v5zM164 15v-2h1v2zM166 15v-3h1v3zM167 15v-3h1v3z" fill="#428f42"/></svg>
<div style="left:1463px;top:652px;width:16px;height:198px;background-color:#fff;background-image:linear-gradient(45deg,#d4d0c8 25%,transparent 25%,transparent 75%,#d4d0c8 75%),linear-gradient(45deg,#d4d0c8 25%,transparent 25%,transparent 75%,#d4d0c8 75%);background-size:2px 2px;background-position:0 0,1px 1px;"></div>
<div style="left:1463px;top:652px;width:16px;height:16px;background:#d4d0c8;border-top:1px solid #d4d0c8;border-left:1px solid #d4d0c8;border-right:1px solid #000;border-bottom:1px solid #000;"></div>
<div style="left:1464px;top:653px;width:14px;height:14px;background:#d4d0c8;border-top:1px solid #fff;border-left:1px solid #fff;border-right:1px solid #808080;border-bottom:1px solid #808080;"></div>
<svg style="left:1467px;top:658px" width="8" height="4" viewBox="0 0 8 4"><path d="M0 4L3.5 0.3L7 4z" fill="#000"/></svg>
<div style="left:1463px;top:834px;width:16px;height:16px;background:#d4d0c8;border-top:1px solid #d4d0c8;border-left:1px solid #d4d0c8;border-right:1px solid #000;border-bottom:1px solid #000;"></div>
<div style="left:1464px;top:835px;width:14px;height:14px;background:#d4d0c8;border-top:1px solid #fff;border-left:1px solid #fff;border-right:1px solid #808080;border-bottom:1px solid #808080;"></div>
<svg style="left:1467px;top:840px" width="8" height="4" viewBox="0 0 8 4"><path d="M0 0L3.5 3.7L7 0z" fill="#000"/></svg>
<div style="left:1463px;top:668px;width:16px;height:76px;background:#d4d0c8;border-top:1px solid #d4d0c8;border-left:1px solid #d4d0c8;border-right:1px solid #000;border-bottom:1px solid #000;"></div>
<div style="left:1464px;top:669px;width:14px;height:74px;background:#d4d0c8;border-top:1px solid #fff;border-left:1px solid #fff;border-right:1px solid #808080;border-bottom:1px solid #808080;"></div>
<div style="left:2px;top:849px;width:1477px;height:1px;background:#d4d0c8;"></div>
<div style="left:1px;top:850px;width:1479px;height:1px;background:#fff;"></div>
<div style="left:0px;top:851px;width:1481px;height:22px;background:#d4d0c8;"></div>
<span class="u" style="left:7px;top:855px;letter-spacing:0.054px;">Showing data from 8,000 samples taken over 8 processes (1000 per process)</span>
<div style="left:1230px;top:854px;width:99px;height:18px;border-top:1px solid #808080;border-left:1px solid #808080;border-right:1px solid #fff;border-bottom:1px solid #fff;"></div>
<span class="u" style="left:1232.5px;top:856px;color:#808080;text-shadow:1px 1px 0 #fff;letter-spacing:0.127px;">Arm Forge 19.0</span>
<div style="left:1331px;top:854px;width:132px;height:18px;border-top:1px solid #808080;border-left:1px solid #808080;border-right:1px solid #fff;border-bottom:1px solid #fff;"></div>
<svg style="left:1334.500px;top:856px" width="13" height="13" viewBox="0 0 13 13"><g transform="rotate(-17 6.500 6.500)"><rect x="1.500" y="1.500" width="10" height="10" fill="#fbc3ad"/><rect x="2" y="2" width="4.500" height="4.500" fill="#fdf1ec"/><rect x="6.500" y="2" width="4.500" height="4.500" fill="#f4581f"/><rect x="2" y="6.500" width="4.500" height="4.500" fill="#f4581f"/><rect x="6.500" y="6.500" width="4.500" height="4.500" fill="#d9e0e3"/></g></svg>
<span class="u" style="left:1356px;top:856px;letter-spacing:-0.120px;">Main Thread View</span>
<svg style="left:1467px;top:859px" width="13" height="13" viewBox="0 0 13 13"><path d="M12 1L1 12M12 5L5 12M12 9L9 12" stroke="#808080" stroke-width="1.400"/><path d="M12 2L2 12M12 6L6 12M12 10L10 12" stroke="#fff" stroke-width="1"/></svg>
</div>
<div style="position:absolute;left:0;top:873px;width:1483px;height:3px;background:#20242c"></div>
</body></html>
